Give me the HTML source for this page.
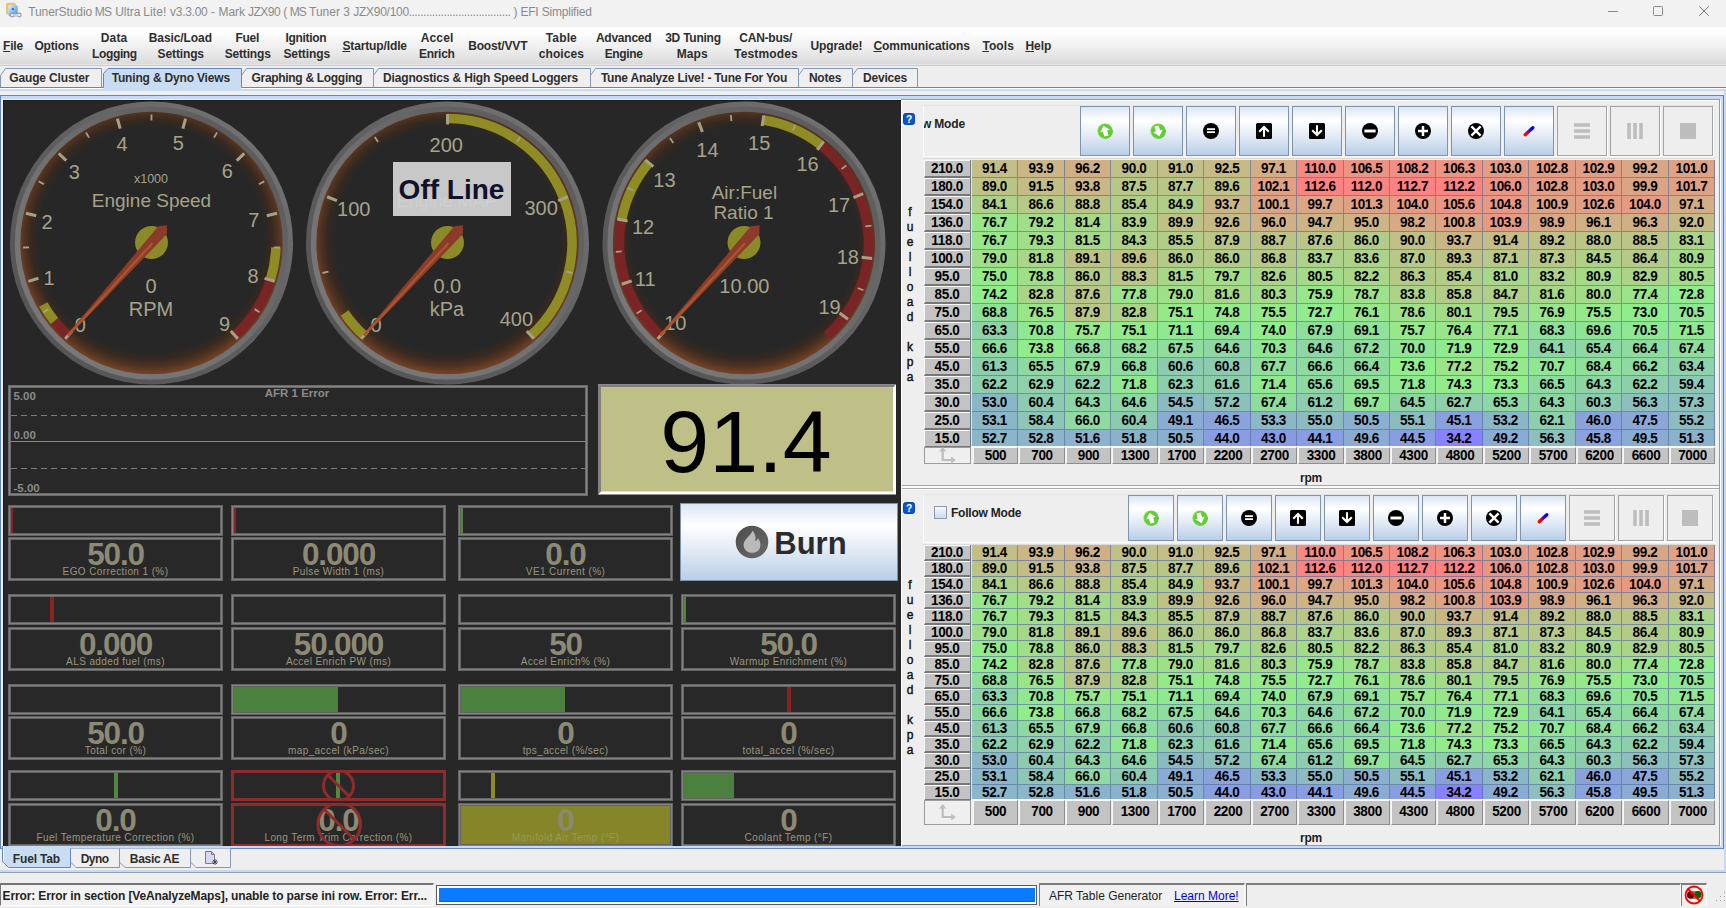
<!DOCTYPE html><html><head><meta charset="utf-8"><title>TunerStudio MS Ultra Lite!</title><style>
*{box-sizing:border-box}
html,body{margin:0;padding:0}
body{width:1726px;height:908px;position:relative;overflow:hidden;background:#eeeeee;font-family:"Liberation Sans",Arial,sans-serif;font-size:12px;color:#222}
.a{position:absolute}
.sb{font-weight:bold;letter-spacing:-0.15px}
#title{left:0;top:0;width:1726px;height:27px;background:#f2f2f2}
#title .t{top:4px;font-size:12px;color:#8a8a8a;white-space:nowrap;line-height:16px}
#menu{left:0;top:27px;width:1726px;height:37px;background:linear-gradient(#ffffff 0%,#fcfcfc 20%,#f0f0f0 52%,#dbdbdb 100%)}
.mi{position:absolute;top:0;height:37px;display:flex;align-items:center;justify-content:center;text-align:center;line-height:16px;font-size:12px;color:#222;white-space:nowrap;font-weight:bold;letter-spacing:-0.15px;transform:translateX(-50%)}
.ml{position:absolute;font-size:12px;line-height:16px;font-weight:bold;color:#2e2e2e;white-space:nowrap}
.ml u{text-decoration:underline;text-underline-offset:1px}
.tab{position:absolute;top:68px;height:20px;border:1px solid #8a9bb5;border-bottom:1px solid #8a9bb5;background:#efefef;font-size:12px;line-height:18px;text-align:center;color:#222;font-weight:bold;letter-spacing:-0.15px;white-space:nowrap}
.tl{font-size:12px;line-height:16px;font-weight:bold;letter-spacing:-0.15px;color:#2e2e2e;white-space:nowrap;z-index:4}
.btab{position:absolute;top:849px;height:19px;border:1px solid #8a9bb5;border-top:none;background:#efefef;font-size:12px;line-height:19px;text-align:center;color:#222;font-weight:bold;letter-spacing:-0.15px;white-space:nowrap}
#dark{left:3px;top:100px;width:898px;height:746px;background:#272727;overflow:hidden;box-shadow:inset 1px 1px 0 #1b1b1b}
.gb{position:absolute;border:3px solid #646464;background:#282828}
.gb:before{content:'';position:absolute;left:-2px;top:-2px;right:-2px;bottom:-2px;border:1px solid #828282}
.gb.red,.gb.red:before{border-color:#8f2b2b}
.gv{position:absolute;left:0;right:0;text-align:center;font-weight:bold;font-size:31.5px;letter-spacing:-1.15px;line-height:28px;color:#8c8a74;top:5px}
.gl{position:absolute;left:0;right:0;text-align:center;font-size:10px;line-height:12px;color:#9a977c;letter-spacing:0.4px;top:28px;white-space:nowrap}
.tb{position:absolute;border:1px solid #7f93ad;background:linear-gradient(#dbe6f3 0%,#ffffff 28%,#e3ebf5 60%,#b9cee7 100%)}
.tbd{position:absolute;border:1px solid #a2a2a2;background:#eeeeee;box-shadow:1px 1px 0 #fff}
.rh{position:absolute;left:924px;width:46px;background:#c3c3c3;font-weight:bold;font-size:13.5px;letter-spacing:-0.35px;text-align:center;color:#000;border-top:1px solid #fafafa;border-bottom:2px solid #787878;border-left:1px solid #fafafa;padding-right:1px}
.ch{position:absolute;background:#c3c3c3;font-weight:bold;font-size:13.5px;letter-spacing:-0.35px;text-align:center;color:#000;border:1px solid #8e8e8e;border-top:1px solid #f8f8f8;border-left:1px solid #f8f8f8}
.c{position:absolute;font-weight:bold;font-size:13.5px;letter-spacing:-0.35px;text-align:center;color:#000;border-right:1px solid rgba(80,105,150,.6);border-bottom:1px solid rgba(80,105,150,.6)}
.c b,.rh b,.ch b{font-weight:inherit;display:inline-block;transform:scaleY(1.08);transform-origin:50% 62%}
.yl{position:absolute;left:903px;width:14px;text-align:center;font-size:12px;line-height:15px;color:#111;-webkit-text-stroke:0.4px #111}
</style></head><body>
<div id="title" class="a">
<svg class="a" style="left:5px;top:2px" width="18" height="18" viewBox="5 2 18 18"><defs><linearGradient id="ic1" x1="0" y1="0" x2="1" y2="1"><stop offset="0" stop-color="#e8f3fd"/><stop offset="0.5" stop-color="#8cc0f2"/><stop offset="1" stop-color="#2f86e4"/></linearGradient></defs><rect x="6.500" y="3.300" width="8.800" height="10.600" rx="1" fill="#e6c577" stroke="#d8b45c" stroke-width=".6"/><rect x="8.300" y="5.200" width="9.400" height="11.100" rx="1.200" fill="url(#ic1)"/><rect x="11.800" y="8.200" width="2.100" height="1.800" fill="#2267c4"/><g fill="none" stroke="#9098a4" stroke-width="1.100"><circle cx="12.300" cy="15" r="1.900" fill="#e9ecf0"/><circle cx="19.300" cy="15" r="1.900" fill="#e9ecf0"/></g><rect x="13.600" y="13.900" width="4.400" height="2.200" fill="#c9cdd4"/></svg>
<div class="a t" style="left:28.2px;letter-spacing:-0.093px">TunerStudio</div>
<div class="a t" style="left:94.7px;letter-spacing:-0.800px">MS</div>
<div class="a t" style="left:115.2px;letter-spacing:-0.007px">Ultra</div>
<div class="a t" style="left:143.2px;letter-spacing:0.124px">Lite!</div>
<div class="a t" style="left:170.1px;letter-spacing:-0.295px">v3.3.00</div>
<div class="a t" style="left:210.7px;letter-spacing:0.000px">-</div>
<div class="a t" style="left:218.5px;letter-spacing:-0.092px">Mark</div>
<div class="a t" style="left:248.1px;letter-spacing:-0.556px">JZX90</div>
<div class="a t" style="left:283.3px;letter-spacing:0.000px">(</div>
<div class="a t" style="left:289.7px;letter-spacing:-0.950px">MS</div>
<div class="a t" style="left:309.1px;letter-spacing:-0.020px">Tuner</div>
<div class="a t" style="left:343.2px;letter-spacing:0.000px">3</div>
<div class="a t" style="left:353.3px;letter-spacing:-0.271px">JZX90/100</div>
<div class="a t" id="tB" style="left:408.5px;letter-spacing:-0.42px">...................................</div>
<div class="a t" id="tC" style="left:513.5px;letter-spacing:-0.2px">) EFI Simplified</div>
<svg class="a" style="left:1590px;top:0" width="136" height="27" viewBox="0 0 136 27"><g stroke="#8a8a8a" stroke-width="1" fill="none"><path d="M18 11.5h10"/><rect x="63.5" y="6.500" width="9" height="9" rx="1"/><path d="M109.300 6.300l9.500 9.500M118.800 6.300l-9.500 9.500" stroke="#777"/></g></svg>
</div>
<div id="menu" class="a">
<div class="ml" style="left:3.1px;top:11px;letter-spacing:-0.230px"><u>F</u>ile</div>
<div class="ml" style="left:34.4px;top:11px;letter-spacing:-0.147px">O<u>p</u>tions</div>
<div class="ml" style="left:100.8px;top:3px;letter-spacing:0.122px">Data</div>
<div class="ml" style="left:92.0px;top:18.5px;letter-spacing:-0.359px">Logging</div>
<div class="ml" style="left:148.8px;top:3px;letter-spacing:-0.092px">Basic/Load</div>
<div class="ml" style="left:157.6px;top:18.5px;letter-spacing:-0.130px">Settings</div>
<div class="ml" style="left:235.4px;top:3px;letter-spacing:-0.267px">Fuel</div>
<div class="ml" style="left:224.7px;top:18.5px;letter-spacing:-0.168px">Settings</div>
<div class="ml" style="left:285.4px;top:3px;letter-spacing:-0.290px">Ignition</div>
<div class="ml" style="left:283.4px;top:18.5px;letter-spacing:-0.080px">Settings</div>
<div class="ml" style="left:342.4px;top:11px;letter-spacing:-0.126px"><u>S</u>tartup/Idle</div>
<div class="ml" style="left:420.7px;top:3px;letter-spacing:0.156px">Accel</div>
<div class="ml" style="left:418.9px;top:18.5px;letter-spacing:-0.257px">Enrich</div>
<div class="ml" style="left:468.2px;top:11px;letter-spacing:-0.174px">Boost/VVT</div>
<div class="ml" style="left:545.8px;top:3px;letter-spacing:0.130px">Table</div>
<div class="ml" style="left:538.8px;top:18.5px;letter-spacing:0.059px">choices</div>
<div class="ml" style="left:595.9px;top:3px;letter-spacing:-0.231px">Advanced</div>
<div class="ml" style="left:604.7px;top:18.5px;letter-spacing:-0.333px">Engine</div>
<div class="ml" style="left:665.2px;top:3px;letter-spacing:-0.241px">3D Tuning</div>
<div class="ml" style="left:676.7px;top:18.5px;letter-spacing:0.108px">Maps</div>
<div class="ml" style="left:739.3px;top:3px;letter-spacing:-0.232px">CAN-bus/</div>
<div class="ml" style="left:734.1px;top:18.5px;letter-spacing:0.149px">Testmodes</div>
<div class="ml" style="left:810.4px;top:11px;letter-spacing:-0.084px">Upgrade!</div>
<div class="ml" style="left:873.4px;top:11px;letter-spacing:-0.060px"><u>C</u>ommunications</div>
<div class="ml" style="left:982.4px;top:11px;letter-spacing:0.078px"><u>T</u>ools</div>
<div class="ml" style="left:1025.4px;top:11px;letter-spacing:0.000px"><u>H</u>elp</div>
</div>
<div class="a" style="left:0;top:64px;width:1726px;height:1px;background:#e6e6e6"></div>
<div class="a" style="left:0;top:65px;width:1726px;height:1px;background:#cccccc"></div>
<div class="a" style="left:0;top:87px;width:1726px;height:1px;background:#6584c4"></div>
<div class="a" style="left:0;top:88px;width:1726px;height:1px;background:#ffffff"></div>
<div class="a" style="left:0;top:89px;width:1726px;height:2px;background:#c6dbf2"></div>
<div class="a" style="left:0;top:91px;width:1726px;height:4px;background:#efefef"></div>
<div class="a" style="left:0;top:95px;width:1724px;height:754px;background:#c6dbf2;border:1px solid #6584c4;border-right-color:#6a7f99"></div>
<div class="a" style="left:1724px;top:89px;width:2px;height:783px;background:#c6dbf2"></div>

<div class="a" style="left:1px;top:96px;width:1720px;height:750px;background:#eeeeee"></div>
<div class="a" style="left:1px;top:96px;width:1722px;height:3px;background:#c6dbf2"></div>
<div class="a" style="left:1721px;top:96px;width:2px;height:752px;background:#c6dbf2"></div>
<div class="a" style="left:1px;top:846px;width:1722px;height:2px;background:#c6dbf2"></div>
<div class="a" style="left:901px;top:99px;width:819px;height:1px;background:#9a9a9a"></div>
<div class="a" style="left:901px;top:100px;width:819px;height:1px;background:#ffffff"></div>
<div class="a" style="left:1719px;top:99px;width:1px;height:747px;background:#9a9a9a"></div>
<div class="a" style="left:1720px;top:100px;width:1px;height:746px;background:#ffffff"></div>
<div class="a" style="left:901px;top:845px;width:819px;height:1px;background:#9a9a9a"></div>
<div class="a" style="left:901px;top:100px;width:1px;height:746px;background:#ffffff"></div>
<svg class="a" style="left:0;top:60px;z-index:3" width="930" height="36" viewBox="0 60 930 36"><path d="M0.5 87V75.5L5.5 68.5H101.5V87" fill="#efefef" stroke="#8597b8" stroke-width="1"/><path d="M241.5 87V75.5L246.5 68.5H373.5V87" fill="#efefef" stroke="#8597b8" stroke-width="1"/><path d="M373.5 87V75.5L378.5 68.5H590.5V87" fill="#efefef" stroke="#8597b8" stroke-width="1"/><path d="M590.5 87V75.5L595.5 68.5H798.5V87" fill="#efefef" stroke="#8597b8" stroke-width="1"/><path d="M798.5 87V75.5L803.5 68.5H852.5V87" fill="#efefef" stroke="#8597b8" stroke-width="1"/><path d="M852.5 87V75.5L857.5 68.5H917.5V87" fill="#efefef" stroke="#8597b8" stroke-width="1"/><path d="M103.5 91V73.5L108.0 68.5H241.5V91z" fill="#c8ddf2" stroke="none"/><path d="M103.5 87.5V73.5L108.0 68.5H241.5V87.5" fill="none" stroke="#6584c4" stroke-width="1"/></svg>
<div class="a tl" style="left:9.3px;top:70px;letter-spacing:-0.150px">Gauge Cluster</div>
<div class="a tl" style="left:111.7px;top:70px;letter-spacing:-0.176px">Tuning &amp; Dyno Views</div>
<div class="a tl" style="left:251.5px;top:70px;letter-spacing:-0.306px">Graphing &amp; Logging</div>
<div class="a tl" style="left:383.0px;top:70px;letter-spacing:-0.156px">Diagnostics &amp; High Speed Loggers</div>
<div class="a tl" style="left:600.9px;top:70px;letter-spacing:-0.217px">Tune Analyze Live! - Tune For You</div>
<div class="a tl" style="left:808.9px;top:70px;letter-spacing:-0.230px">Notes</div>
<div class="a tl" style="left:862.9px;top:70px;letter-spacing:-0.164px">Devices</div><div id="dark" class="a">
<svg class="a" style="left:0;top:0" width="898" height="746" viewBox="3 100 898 746" font-family="Liberation Sans, Arial, sans-serif">
<defs>
<linearGradient id="ring" x1="0.15" y1="0.85" x2="0.85" y2="0.15"><stop offset="0" stop-color="#787878"/><stop offset="0.45" stop-color="#707070"/><stop offset="1" stop-color="#5c5c5c"/></linearGradient>
<linearGradient id="ringo" x1="0.15" y1="0.85" x2="0.85" y2="0.15"><stop offset="0" stop-color="#565656"/><stop offset="0.5" stop-color="#5e5e5e"/><stop offset="1" stop-color="#707070"/></linearGradient>
<radialGradient id="face1" gradientUnits="userSpaceOnUse" cx="151.5" cy="239.5" r="135.1"><stop offset="0" stop-color="#272727"/><stop offset="0.835" stop-color="#272727"/><stop offset="0.89" stop-color="#36291f"/><stop offset="0.94" stop-color="#503221"/><stop offset="0.98" stop-color="#6c3e25"/><stop offset="1" stop-color="#754227"/></radialGradient>
<radialGradient id="face2" gradientUnits="userSpaceOnUse" cx="447.5" cy="239.5" r="135.1"><stop offset="0" stop-color="#272727"/><stop offset="0.835" stop-color="#272727"/><stop offset="0.89" stop-color="#36291f"/><stop offset="0.94" stop-color="#503221"/><stop offset="0.98" stop-color="#6c3e25"/><stop offset="1" stop-color="#754227"/></radialGradient>
<radialGradient id="face3" gradientUnits="userSpaceOnUse" cx="744" cy="239.5" r="135.1"><stop offset="0" stop-color="#272727"/><stop offset="0.835" stop-color="#272727"/><stop offset="0.89" stop-color="#36291f"/><stop offset="0.94" stop-color="#503221"/><stop offset="0.98" stop-color="#6c3e25"/><stop offset="1" stop-color="#754227"/></radialGradient>
</defs>
<circle cx="151.5" cy="243" r="141.5" fill="url(#ringo)"/>
<circle cx="151.5" cy="243" r="136.6" fill="url(#ring)"/>
<circle cx="151.5" cy="243" r="131.2" fill="url(#face1)"/>
<path d="M68.19 335.52A124.5 124.5 0 0 1 54.47 321.01" fill="none" stroke="#7a2426" stroke-width="9.6"/>
<path d="M54.47 321.01A124.5 124.5 0 0 1 43.25 304.5" fill="none" stroke="#8f8b25" stroke-width="9.6"/>
<path d="M275.92 247.34A124.5 124.5 0 0 1 270.35 280.09" fill="none" stroke="#8f8b25" stroke-width="9.6"/>
<path d="M270.35 280.09A124.5 124.5 0 0 1 234.81 335.52" fill="none" stroke="#7a2426" stroke-width="9.6"/>
<path d="M48.38 309.12L43.33 312.36" stroke="#a5a187" stroke-width="1.8"/>
<path d="M29.07 247.28L23.08 247.48" stroke="#a5a187" stroke-width="1.8"/>
<path d="M44.02 184.24L38.75 181.36" stroke="#a5a187" stroke-width="1.8"/>
<path d="M89.02 137.63L85.96 132.47" stroke="#a5a187" stroke-width="1.8"/>
<path d="M151.5 120.5L151.5 114.5" stroke="#a5a187" stroke-width="1.8"/>
<path d="M213.98 137.63L217.04 132.47" stroke="#a5a187" stroke-width="1.8"/>
<path d="M258.98 184.24L264.25 181.36" stroke="#a5a187" stroke-width="1.8"/>
<path d="M273.93 247.28L279.92 247.48" stroke="#a5a187" stroke-width="1.8"/>
<path d="M254.62 309.12L259.67 312.36" stroke="#a5a187" stroke-width="1.8"/>
<path d="M72.21 331.06L65.18 338.87" stroke="#a5a187" stroke-width="3"/>
<path d="M38.38 278.3L28.36 281.43" stroke="#a5a187" stroke-width="3"/>
<path d="M36.19 215.67L25.98 213.25" stroke="#a5a187" stroke-width="3"/>
<path d="M66.26 160.68L58.71 153.39" stroke="#a5a187" stroke-width="3"/>
<path d="M120.16 128.72L117.39 118.59" stroke="#a5a187" stroke-width="3"/>
<path d="M182.84 128.72L185.61 118.59" stroke="#a5a187" stroke-width="3"/>
<path d="M236.74 160.68L244.29 153.39" stroke="#a5a187" stroke-width="3"/>
<path d="M266.81 215.67L277.02 213.25" stroke="#a5a187" stroke-width="3"/>
<path d="M264.62 278.3L274.64 281.43" stroke="#a5a187" stroke-width="3"/>
<path d="M230.79 331.06L237.82 338.87" stroke="#a5a187" stroke-width="3"/>
<text x="80.4" y="332.2" font-size="20" fill="#a6a38b" text-anchor="middle">0</text>
<text x="49" y="285.2" font-size="20" fill="#a6a38b" text-anchor="middle">1</text>
<text x="47" y="229.2" font-size="20" fill="#a6a38b" text-anchor="middle">2</text>
<text x="74.3" y="179.2" font-size="20" fill="#a6a38b" text-anchor="middle">3</text>
<text x="122" y="151.2" font-size="20" fill="#a6a38b" text-anchor="middle">4</text>
<text x="178.4" y="150.2" font-size="20" fill="#a6a38b" text-anchor="middle">5</text>
<text x="227.3" y="178.2" font-size="20" fill="#a6a38b" text-anchor="middle">6</text>
<text x="253.7" y="226.7" font-size="20" fill="#a6a38b" text-anchor="middle">7</text>
<text x="253" y="282.9" font-size="20" fill="#a6a38b" text-anchor="middle">8</text>
<text x="224.6" y="331.2" font-size="20" fill="#a6a38b" text-anchor="middle">9</text>
<text x="151" y="182.5" font-size="12.5" fill="#a6a38b" text-anchor="middle">x1000</text>
<text x="151.5" y="206.84" font-size="19" fill="#a6a38b" text-anchor="middle">Engine Speed</text>
<text x="151" y="293.2" font-size="20" fill="#a6a38b" text-anchor="middle">0</text>
<text x="151" y="316.2" font-size="20" fill="#a6a38b" text-anchor="middle">RPM</text>
<circle cx="151.5" cy="242.5" r="16.5" fill="#8b8a28"/><polygon points="68.68,336.13 166.85,234.12 167.02,225.26 158.23,226.36 67.04,334.66" fill="#8c3b2a"/><path d="M67.86 335.39L152.39 243.3" stroke="#ae5a2c" stroke-width="2.4" stroke-opacity="0.85"/>
<circle cx="447.5" cy="243" r="141.5" fill="url(#ringo)"/>
<circle cx="447.5" cy="243" r="136.6" fill="url(#ring)"/>
<circle cx="447.5" cy="243" r="131.2" fill="url(#face2)"/>
<path d="M364.19 335.52A124.5 124.5 0 0 1 344.53 312.98" fill="none" stroke="#8f8b25" stroke-width="9.6"/>
<path d="M447.5 118.5A124.5 124.5 0 0 1 530.81 335.52" fill="none" stroke="#8f8b25" stroke-width="9.6"/>
<path d="M328.38 271.6L322.55 273" stroke="#a5a187" stroke-width="1.8"/>
<path d="M378.12 142.04L374.72 137.1" stroke="#a5a187" stroke-width="1.8"/>
<path d="M516.88 142.04L520.28 137.1" stroke="#a5a187" stroke-width="1.8"/>
<path d="M566.62 271.6L572.45 273" stroke="#a5a187" stroke-width="1.8"/>
<path d="M368.21 331.06L361.18 338.87" stroke="#a5a187" stroke-width="3"/>
<path d="M336.87 200.53L327.07 196.77" stroke="#a5a187" stroke-width="3"/>
<path d="M447.5 124.5L447.5 114" stroke="#a5a187" stroke-width="3"/>
<path d="M558.13 200.53L567.93 196.77" stroke="#a5a187" stroke-width="3"/>
<path d="M526.79 331.06L533.82 338.87" stroke="#a5a187" stroke-width="3"/>
<text x="376" y="332.2" font-size="20" fill="#a6a38b" text-anchor="middle">0</text>
<text x="353.8" y="216.2" font-size="20" fill="#a6a38b" text-anchor="middle">100</text>
<text x="446.3" y="151.7" font-size="20" fill="#a6a38b" text-anchor="middle">200</text>
<text x="541.2" y="215.2" font-size="20" fill="#a6a38b" text-anchor="middle">300</text>
<text x="516.4" y="326.2" font-size="20" fill="#a6a38b" text-anchor="middle">400</text>
<text x="446.5" y="206.98" font-size="18" fill="#a6a38b" text-anchor="middle">Engine MAP</text>
<text x="447.3" y="293.2" font-size="20" fill="#a6a38b" text-anchor="middle">0.0</text>
<text x="447" y="315.7" font-size="20" fill="#a6a38b" text-anchor="middle">kPa</text>
<circle cx="447.5" cy="242.5" r="16.5" fill="#8b8a28"/><polygon points="364.68,336.13 462.85,234.12 463.02,225.26 454.23,226.36 363.04,334.66" fill="#8c3b2a"/><path d="M363.86 335.39L448.39 243.3" stroke="#ae5a2c" stroke-width="2.4" stroke-opacity="0.85"/>
<circle cx="744" cy="243" r="141.5" fill="url(#ringo)"/>
<circle cx="744" cy="243" r="136.6" fill="url(#ring)"/>
<circle cx="744" cy="243" r="131.2" fill="url(#face3)"/>
<path d="M660.69 335.52A124.5 124.5 0 0 1 621.67 219.83" fill="none" stroke="#7a2426" stroke-width="9.6"/>
<path d="M621.67 219.83A124.5 124.5 0 0 1 648.75 162.83" fill="none" stroke="#8f8b25" stroke-width="9.6"/>
<path d="M763.07 119.97A124.5 124.5 0 0 1 820.94 145.12" fill="none" stroke="#8f8b25" stroke-width="9.6"/>
<path d="M820.94 145.12A124.5 124.5 0 0 1 827.31 335.52" fill="none" stroke="#7a2426" stroke-width="9.6"/>
<path d="M641.64 310.29L636.62 313.59" stroke="#a5a187" stroke-width="1.8"/>
<path d="M621.79 251.45L615.81 251.87" stroke="#a5a187" stroke-width="1.8"/>
<path d="M633.35 190.45L627.93 187.87" stroke="#a5a187" stroke-width="1.8"/>
<path d="M673.33 142.94L669.87 138.04" stroke="#a5a187" stroke-width="1.8"/>
<path d="M731.47 121.14L730.85 115.17" stroke="#a5a187" stroke-width="1.8"/>
<path d="M792.83 130.65L795.22 125.15" stroke="#a5a187" stroke-width="1.8"/>
<path d="M841.64 169.02L846.42 165.4" stroke="#a5a187" stroke-width="1.8"/>
<path d="M865.37 226.4L871.31 225.59" stroke="#a5a187" stroke-width="1.8"/>
<path d="M857.92 288.04L863.5 290.25" stroke="#a5a187" stroke-width="1.8"/>
<path d="M664.71 331.06L657.68 338.87" stroke="#a5a187" stroke-width="3"/>
<path d="M631.71 280.87L621.77 284.23" stroke="#a5a187" stroke-width="3"/>
<path d="M627.57 220.95L617.25 219" stroke="#a5a187" stroke-width="3"/>
<path d="M653.34 166.69L645.3 159.93" stroke="#a5a187" stroke-width="3"/>
<path d="M702.4 132.04L698.71 122.21" stroke="#a5a187" stroke-width="3"/>
<path d="M762.15 125.9L763.75 115.52" stroke="#a5a187" stroke-width="3"/>
<path d="M817.23 149.84L823.72 141.58" stroke="#a5a187" stroke-width="3"/>
<path d="M853.5 197.71L863.21 193.7" stroke="#a5a187" stroke-width="3"/>
<path d="M861.64 257.22L872.07 258.48" stroke="#a5a187" stroke-width="3"/>
<path d="M839.56 313.08L848.02 319.29" stroke="#a5a187" stroke-width="3"/>
<text x="675.3" y="329.5" font-size="20" fill="#a6a38b" text-anchor="middle">10</text>
<text x="645.2" y="286.2" font-size="20" fill="#a6a38b" text-anchor="middle">11</text>
<text x="643" y="233.7" font-size="20" fill="#a6a38b" text-anchor="middle">12</text>
<text x="664.4" y="187.2" font-size="20" fill="#a6a38b" text-anchor="middle">13</text>
<text x="707.4" y="156.7" font-size="20" fill="#a6a38b" text-anchor="middle">14</text>
<text x="759.2" y="150.2" font-size="20" fill="#a6a38b" text-anchor="middle">15</text>
<text x="807.5" y="170.9" font-size="20" fill="#a6a38b" text-anchor="middle">16</text>
<text x="839" y="212.2" font-size="20" fill="#a6a38b" text-anchor="middle">17</text>
<text x="847.8" y="264.2" font-size="20" fill="#a6a38b" text-anchor="middle">18</text>
<text x="829.6" y="313.7" font-size="20" fill="#a6a38b" text-anchor="middle">19</text>
<text x="744.4" y="198.84" font-size="19" fill="#a6a38b" text-anchor="middle">Air:Fuel</text>
<text x="743.5" y="218.84" font-size="19" fill="#a6a38b" text-anchor="middle">Ratio 1</text>
<text x="744.4" y="293.2" font-size="20" fill="#a6a38b" text-anchor="middle">10.00</text>
<circle cx="744" cy="242.5" r="16.5" fill="#8b8a28"/><polygon points="661.18,336.13 759.35,234.12 759.52,225.26 750.73,226.36 659.54,334.66" fill="#8c3b2a"/><path d="M660.36 335.39L744.89 243.3" stroke="#ae5a2c" stroke-width="2.4" stroke-opacity="0.85"/>
<rect x="393" y="162" width="118" height="54" fill="#d2d2d2" fill-opacity="0.945"/>
<text x="451.5" y="198.5" font-size="28" font-weight="bold" fill="#11112a" text-anchor="middle">Off Line</text>
<rect x="9.500" y="386.500" width="577" height="108" fill="#282828" stroke="#6a6a6a" stroke-width="3"/>
<rect x="9.500" y="386.500" width="577" height="108" fill="none" stroke="#868686" stroke-width="1"/>
<path d="M11 415.500H585M11 468.500H585" stroke="#7c7c7c" stroke-width="1" stroke-dasharray="6 4"/>
<path d="M11 441.500H585" stroke="#8a8a8a" stroke-width="1"/>
<text x="297" y="396.500" font-size="11.500" font-weight="bold" fill="#8a8a8a" text-anchor="middle">AFR 1 Error</text>
<text x="13.500" y="400" font-size="11.500" font-weight="bold" fill="#8a8a8a">5.00</text>
<text x="13.500" y="438.500" font-size="11.500" font-weight="bold" fill="#8a8a8a">0.00</text>
<text x="13.500" y="491.500" font-size="11.500" font-weight="bold" fill="#8a8a8a">-5.00</text>
<rect x="598" y="384.500" width="298" height="110" fill="#ffffff"/>
<path d="M598 384.500H896L893 387.500H601V491.500L598 494.500z" fill="#808080"/>
<rect x="601" y="387.500" width="292" height="104" fill="#bfbf88"/>
<text x="746" y="472" font-size="88" fill="#000" text-anchor="middle">91.4</text>
</svg>
<div class="gb" style="left:5px;top:405px;width:215px;height:31px;">
<div class="a" style="left:0px;top:0;width:2px;height:25px;background:#8b2222"></div>
</div>
<div class="gb" style="left:5px;top:437px;width:215px;height:44px;">
<div class="gv" style="top:0px">50.0</div><div class="gl" style="top:26px">EGO Correction 1 (%)</div>
</div>
<div class="gb" style="left:228px;top:405px;width:215px;height:31px;">
<div class="a" style="left:0px;top:0;width:2px;height:25px;background:#8b2222"></div>
</div>
<div class="gb" style="left:228px;top:437px;width:215px;height:44px;">
<div class="gv" style="top:0px">0.000</div><div class="gl" style="top:26px">Pulse Width 1 (ms)</div>
</div>
<div class="gb" style="left:455px;top:405px;width:215px;height:31px;">
<div class="a" style="left:0px;top:0;width:2px;height:25px;background:#4f8a3c"></div>
</div>
<div class="gb" style="left:455px;top:437px;width:215px;height:44px;">
<div class="gv" style="top:0px">0.0</div><div class="gl" style="top:26px">VE1 Current (%)</div>
</div>
<div class="gb" style="left:5px;top:494px;width:215px;height:31px;">
<div class="a" style="left:39px;top:0;width:4px;height:25px;background:#8b2222"></div>
</div>
<div class="gb" style="left:5px;top:527px;width:215px;height:44px;">
<div class="gv" style="top:0px">0.000</div><div class="gl" style="top:26px">ALS added fuel (ms)</div>
</div>
<div class="gb" style="left:228px;top:494px;width:215px;height:31px;">
</div>
<div class="gb" style="left:228px;top:527px;width:215px;height:44px;">
<div class="gv" style="top:0px">50.000</div><div class="gl" style="top:26px">Accel Enrich PW (ms)</div>
</div>
<div class="gb" style="left:455px;top:494px;width:215px;height:31px;">
</div>
<div class="gb" style="left:455px;top:527px;width:215px;height:44px;">
<div class="gv" style="top:0px">50</div><div class="gl" style="top:26px">Accel Enrich% (%)</div>
</div>
<div class="gb" style="left:678px;top:494px;width:215px;height:31px;">
<div class="a" style="left:0px;top:0;width:2px;height:25px;background:#4f8a3c"></div>
</div>
<div class="gb" style="left:678px;top:527px;width:215px;height:44px;">
<div class="gv" style="top:0px">50.0</div><div class="gl" style="top:26px">Warmup Enrichment (%)</div>
</div>
<div class="gb" style="left:5px;top:584px;width:215px;height:31px;">
</div>
<div class="gb" style="left:5px;top:616px;width:215px;height:44px;">
<div class="gv" style="top:0px">50.0</div><div class="gl" style="top:26px">Total cor (%)</div>
</div>
<div class="gb" style="left:228px;top:584px;width:215px;height:31px;">
<div class="a" style="left:0px;top:0;width:104px;height:25px;background:#4c803e"></div>
</div>
<div class="gb" style="left:228px;top:616px;width:215px;height:44px;">
<div class="gv" style="top:0px">0</div><div class="gl" style="top:26px">map_accel (kPa/sec)</div>
</div>
<div class="gb" style="left:455px;top:584px;width:215px;height:31px;">
<div class="a" style="left:0px;top:0;width:104px;height:25px;background:#4c803e"></div>
</div>
<div class="gb" style="left:455px;top:616px;width:215px;height:44px;">
<div class="gv" style="top:0px">0</div><div class="gl" style="top:26px">tps_accel (%/sec)</div>
</div>
<div class="gb" style="left:678px;top:584px;width:215px;height:31px;">
<div class="a" style="left:103px;top:0;width:4px;height:25px;background:#8b2222"></div>
</div>
<div class="gb" style="left:678px;top:616px;width:215px;height:44px;">
<div class="gv" style="top:0px">0</div><div class="gl" style="top:26px">total_accel (%/sec)</div>
</div>
<div class="gb" style="left:5px;top:670px;width:215px;height:31px;">
<div class="a" style="left:102.5px;top:0;width:4px;height:25px;background:#4f8a3c"></div>
</div>
<div class="gb" style="left:5px;top:703px;width:215px;height:44px;">
<div class="gv" style="top:0px">0.0</div><div class="gl" style="top:26px">Fuel Temperature Correction (%)</div>
</div>
<div class="gb red" style="left:228px;top:670px;width:215px;height:31px;">
<div class="a" style="left:102px;top:0;width:4px;height:25px;background:#4f8a3c"></div>
</div>
<div class="gb red" style="left:228px;top:703px;width:215px;height:44px;">
<div class="gv" style="top:0px">0.0</div><div class="gl" style="top:26px">Long Term Trim Correction (%)</div>
</div>
<div class="gb" style="left:455px;top:670px;width:215px;height:31px;">
<div class="a" style="left:30px;top:0;width:4px;height:25px;background:#8f8b25"></div>
</div>
<div class="gb" style="left:455px;top:703px;width:215px;height:44px;background:#85852a;">
<div class="gv" style="top:0px;color:#8a8a6e">0</div><div class="gl" style="top:26px;color:#9a9a52">Manifold Air Temp (°F)</div>
</div>
<div class="gb" style="left:678px;top:670px;width:215px;height:31px;">
<div class="a" style="left:0px;top:0;width:50px;height:25px;background:#4c803e"></div>
</div>
<div class="gb" style="left:678px;top:703px;width:215px;height:44px;">
<div class="gv" style="top:0px">0</div><div class="gl" style="top:26px">Coolant Temp (°F)</div>
</div>
<svg class="a" style="left:228px;top:670px" width="215" height="31" viewBox="231 770 215 31"><g fill="none" stroke="#8f2b2b" stroke-width="3"><circle cx="338.500" cy="785.700" r="15"/><path d="M327.900 775.100L349.100 796.300"/></g></svg>
<svg class="a" style="left:228px;top:703px" width="215" height="43" viewBox="231 803 215 43"><g fill="none" stroke="#8f2b2b" stroke-width="3"><circle cx="339.200" cy="824.400" r="21.300"/><path d="M324.100 809.300L354.300 839.500"/></g></svg>
<div class="a" style="left:228px;top:745px;width:215px;height:1px;background:#ff0000"></div>
<div class="tb" style="left:677px;top:403px;width:218px;height:78px"></div>
<svg class="a" style="left:732px;top:425px" width="34" height="34" viewBox="0 0 34 34"><defs><linearGradient id="fg" x1="0" y1="0" x2="1" y2="1"><stop offset="0" stop-color="#4c4c4c"/><stop offset="1" stop-color="#6a6a6a"/></linearGradient></defs><circle cx="17" cy="17" r="16.3" fill="url(#fg)"/><path d="M17.5 5.5c2.5 3.5 4 6 2.5 10.5 1.5-.3 2.6-1.6 3-3 2 3 2.8 5.5 2.300 8.500-.8 4-4 6.300-8.300 6.300s-7.800-2.800-8.300-6.800c-.5-4 1.800-6.500 4.300-9 2-2 3.500-3.700 4.500-6.500z" fill="#b9b9b9"/></svg>
<div class="a" style="left:771.3px;top:427px;font-size:31px;font-weight:bold;line-height:34px;color:#2b2b2b">Burn</div>
</div><div class="a" style="left:903px;top:113px;line-height:0"><svg width="12" height="12" viewBox="0 0 13 13"><rect x="0.500" y="0.500" width="12" height="12" rx="2.500" fill="#0a56c8" stroke="#003c9e"/><text x="6.500" y="10.500" font-size="11" font-weight="bold" fill="#fff" text-anchor="middle" font-family="Liberation Sans, Arial, sans-serif">?</text></svg></div>
<div class="a" style="left:923px;top:105px;width:792px;height:52px;border-left:1px solid #fbfbfb;border-bottom:1px solid #fbfbfb;border-top:1px solid #e4e4e4;background:#eeeeee;overflow:hidden"><div class="a sb" style="left:-30px;top:10px;font-size:12px;line-height:16px;white-space:nowrap;color:#222">Follow Mode</div></div>
<div class="a" style="left:923px;top:158px;width:792px;height:1px;background:#dcdcdc"></div>
<div class="tb" style="left:1080px;top:106px;width:50px;height:50px"><div class="a" style="left:16px;top:16px;width:16px;height:16px;line-height:0"><svg width="16" height="16" viewBox="0 0 16 16"><circle cx="8.300" cy="8.300" r="7.500" fill="#49a828"/><circle cx="7.800" cy="7.800" r="7.400" fill="#9be45c"/><circle cx="8.200" cy="8.100" r="7" fill="#5fce33"/><path d="M8 2.500L13 8.200H10.200V13.200H5.800V8.200H3z" fill="#fff" transform="rotate(-16 8 8)"/></svg></div></div>
<div class="tb" style="left:1133px;top:106px;width:50px;height:50px"><div class="a" style="left:16px;top:16px;width:16px;height:16px;line-height:0"><svg width="16" height="16" viewBox="0 0 16 16"><circle cx="8.300" cy="8.300" r="7.500" fill="#49a828"/><circle cx="7.800" cy="7.800" r="7.400" fill="#9be45c"/><circle cx="8.200" cy="8.100" r="7" fill="#5fce33"/><path d="M8 13.500L3 7.800H5.800V2.800H10.200V7.800H13z" fill="#fff" transform="rotate(-16 8 8)"/></svg></div></div>
<div class="tb" style="left:1186px;top:106px;width:50px;height:50px"><div class="a" style="left:16px;top:16px;width:16px;height:16px;line-height:0"><svg width="16" height="16" viewBox="0 0 16 16"><circle cx="8" cy="8" r="8" fill="#000"/><path d="M4 6.100h8M4 9.200h8" stroke="#fff" stroke-width="1.800"/></svg></div></div>
<div class="tb" style="left:1239px;top:106px;width:50px;height:50px"><div class="a" style="left:16px;top:16px;width:16px;height:16px;line-height:0"><svg width="16" height="16" viewBox="0 0 16 16"><rect width="16" height="16" rx="1.500" fill="#000"/><path d="M8 13.800V4.500M3.200 8.800L8 4 12.800 8.800" fill="none" stroke="#fff" stroke-width="2.100"/></svg></div></div>
<div class="tb" style="left:1292px;top:106px;width:50px;height:50px"><div class="a" style="left:16px;top:16px;width:16px;height:16px;line-height:0"><svg width="16" height="16" viewBox="0 0 16 16"><rect width="16" height="16" rx="1.500" fill="#000"/><path d="M8 2.200V11.500M3.200 7.200L8 12 12.800 7.200" fill="none" stroke="#fff" stroke-width="2.100"/></svg></div></div>
<div class="tb" style="left:1345px;top:106px;width:50px;height:50px"><div class="a" style="left:16px;top:16px;width:16px;height:16px;line-height:0"><svg width="16" height="16" viewBox="0 0 16 16"><circle cx="8" cy="8" r="8" fill="#000"/><path d="M2.400 8h11.200" stroke="#fff" stroke-width="2.900"/></svg></div></div>
<div class="tb" style="left:1398px;top:106px;width:50px;height:50px"><div class="a" style="left:16px;top:16px;width:16px;height:16px;line-height:0"><svg width="16" height="16" viewBox="0 0 16 16"><circle cx="8" cy="8" r="8" fill="#000"/><path d="M3 8h10M8 3v10" stroke="#fff" stroke-width="2.500"/></svg></div></div>
<div class="tb" style="left:1451px;top:106px;width:50px;height:50px"><div class="a" style="left:16px;top:16px;width:16px;height:16px;line-height:0"><svg width="16" height="16" viewBox="0 0 16 16"><circle cx="8" cy="8" r="8" fill="#000"/><path d="M3.400 3.400l9.200 9.200M12.600 3.400l-9.200 9.200" stroke="#fff" stroke-width="2.400"/></svg></div></div>
<div class="tb" style="left:1504px;top:106px;width:50px;height:50px"><div class="a" style="left:16px;top:16px;width:16px;height:16px;line-height:0"><svg width="16" height="16" viewBox="0 0 16 16"><defs><linearGradient id="ip" x1="0" y1="1" x2="1" y2="0"><stop offset="0.15" stop-color="#ff0000"/><stop offset="0.85" stop-color="#0000ff"/></linearGradient></defs><path d="M4.200 11.700L11.800 4.700" stroke="url(#ip)" stroke-width="3.300" stroke-linecap="round"/></svg></div></div>
<div class="tbd" style="left:1557px;top:106px;width:50px;height:50px"><div class="a" style="left:16px;top:16px;width:16px;height:16px;line-height:0"><svg width="16" height="16" viewBox="0 0 16 16"><path d="M0 2h16M0 8h16M0 14h16" stroke="#bdbdbd" stroke-width="3.600"/></svg></div></div>
<div class="tbd" style="left:1610px;top:106px;width:50px;height:50px"><div class="a" style="left:16px;top:16px;width:16px;height:16px;line-height:0"><svg width="16" height="16" viewBox="0 0 16 16"><path d="M2 0v16M8 0v16M14 0v16" stroke="#bdbdbd" stroke-width="3.600"/></svg></div></div>
<div class="tbd" style="left:1663px;top:106px;width:50px;height:50px"><div class="a" style="left:16px;top:16px;width:16px;height:16px;line-height:0"><svg width="16" height="16" viewBox="0 0 16 16"><rect width="16" height="16" fill="#bdbdbd"/></svg></div></div>
<div class="rh" style="top:160px;height:18px;line-height:15px"><b>210.0</b></div>
<div class="c" style="left:972px;top:160px;width:46px;height:18px;line-height:17px;background:#c3bd87"><b>91.4</b></div>
<div class="c" style="left:1018px;top:160px;width:47px;height:18px;line-height:17px;background:#cab686"><b>93.9</b></div>
<div class="c" style="left:1065px;top:160px;width:46px;height:18px;line-height:17px;background:#d0af86"><b>96.2</b></div>
<div class="c" style="left:1111px;top:160px;width:47px;height:18px;line-height:17px;background:#bfc087"><b>90.0</b></div>
<div class="c" style="left:1158px;top:160px;width:46px;height:18px;line-height:17px;background:#c2be87"><b>91.0</b></div>
<div class="c" style="left:1204px;top:160px;width:47px;height:18px;line-height:17px;background:#c6ba87"><b>92.5</b></div>
<div class="c" style="left:1251px;top:160px;width:46px;height:18px;line-height:17px;background:#d3ad86"><b>97.1</b></div>
<div class="c" style="left:1297px;top:160px;width:47px;height:18px;line-height:17px;background:#f78983"><b>110.0</b></div>
<div class="c" style="left:1344px;top:160px;width:46px;height:18px;line-height:17px;background:#ed9383"><b>106.5</b></div>
<div class="c" style="left:1390px;top:160px;width:46px;height:18px;line-height:17px;background:#f28e83"><b>108.2</b></div>
<div class="c" style="left:1436px;top:160px;width:47px;height:18px;line-height:17px;background:#ed9483"><b>106.3</b></div>
<div class="c" style="left:1483px;top:160px;width:46px;height:18px;line-height:17px;background:#e49d84"><b>103.0</b></div>
<div class="c" style="left:1529px;top:160px;width:47px;height:18px;line-height:17px;background:#e39d84"><b>102.8</b></div>
<div class="c" style="left:1576px;top:160px;width:46px;height:18px;line-height:17px;background:#e39d84"><b>102.9</b></div>
<div class="c" style="left:1622px;top:160px;width:47px;height:18px;line-height:17px;background:#d9a785"><b>99.2</b></div>
<div class="c" style="left:1669px;top:160px;width:46px;height:18px;line-height:17px;background:#dea285"><b>101.0</b></div>
<div class="rh" style="top:178px;height:18px;line-height:15px"><b>180.0</b></div>
<div class="c" style="left:972px;top:178px;width:46px;height:18px;line-height:17px;background:#bcc387"><b>89.0</b></div>
<div class="c" style="left:1018px;top:178px;width:47px;height:18px;line-height:17px;background:#c3bc87"><b>91.5</b></div>
<div class="c" style="left:1065px;top:178px;width:46px;height:18px;line-height:17px;background:#cab686"><b>93.8</b></div>
<div class="c" style="left:1111px;top:178px;width:47px;height:18px;line-height:17px;background:#b8c788"><b>87.5</b></div>
<div class="c" style="left:1158px;top:178px;width:46px;height:18px;line-height:17px;background:#b8c788"><b>87.7</b></div>
<div class="c" style="left:1204px;top:178px;width:47px;height:18px;line-height:17px;background:#bec287"><b>89.6</b></div>
<div class="c" style="left:1251px;top:178px;width:46px;height:18px;line-height:17px;background:#e19f84"><b>102.1</b></div>
<div class="c" style="left:1297px;top:178px;width:47px;height:18px;line-height:17px;background:#ff8282"><b>112.6</b></div>
<div class="c" style="left:1344px;top:178px;width:46px;height:18px;line-height:17px;background:#fd8482"><b>112.0</b></div>
<div class="c" style="left:1390px;top:178px;width:46px;height:18px;line-height:17px;background:#ff8282"><b>112.7</b></div>
<div class="c" style="left:1436px;top:178px;width:47px;height:18px;line-height:17px;background:#fe8382"><b>112.2</b></div>
<div class="c" style="left:1483px;top:178px;width:46px;height:18px;line-height:17px;background:#ec9484"><b>106.0</b></div>
<div class="c" style="left:1529px;top:178px;width:47px;height:18px;line-height:17px;background:#e39d84"><b>102.8</b></div>
<div class="c" style="left:1576px;top:178px;width:46px;height:18px;line-height:17px;background:#e49d84"><b>103.0</b></div>
<div class="c" style="left:1622px;top:178px;width:47px;height:18px;line-height:17px;background:#dba585"><b>99.9</b></div>
<div class="c" style="left:1669px;top:178px;width:46px;height:18px;line-height:17px;background:#e0a085"><b>101.7</b></div>
<div class="rh" style="top:196px;height:18px;line-height:15px"><b>154.0</b></div>
<div class="c" style="left:972px;top:196px;width:46px;height:18px;line-height:17px;background:#aed189"><b>84.1</b></div>
<div class="c" style="left:1018px;top:196px;width:47px;height:18px;line-height:17px;background:#b5ca88"><b>86.6</b></div>
<div class="c" style="left:1065px;top:196px;width:46px;height:18px;line-height:17px;background:#bbc487"><b>88.8</b></div>
<div class="c" style="left:1111px;top:196px;width:47px;height:18px;line-height:17px;background:#b2cd88"><b>85.4</b></div>
<div class="c" style="left:1158px;top:196px;width:46px;height:18px;line-height:17px;background:#b0ce88"><b>84.9</b></div>
<div class="c" style="left:1204px;top:196px;width:47px;height:18px;line-height:17px;background:#c9b686"><b>93.7</b></div>
<div class="c" style="left:1251px;top:196px;width:46px;height:18px;line-height:17px;background:#dba585"><b>100.1</b></div>
<div class="c" style="left:1297px;top:196px;width:47px;height:18px;line-height:17px;background:#daa685"><b>99.7</b></div>
<div class="c" style="left:1344px;top:196px;width:46px;height:18px;line-height:17px;background:#dfa185"><b>101.3</b></div>
<div class="c" style="left:1390px;top:196px;width:46px;height:18px;line-height:17px;background:#e69a84"><b>104.0</b></div>
<div class="c" style="left:1436px;top:196px;width:47px;height:18px;line-height:17px;background:#eb9684"><b>105.6</b></div>
<div class="c" style="left:1483px;top:196px;width:46px;height:18px;line-height:17px;background:#e99884"><b>104.8</b></div>
<div class="c" style="left:1529px;top:196px;width:47px;height:18px;line-height:17px;background:#dea285"><b>100.9</b></div>
<div class="c" style="left:1576px;top:196px;width:46px;height:18px;line-height:17px;background:#e29e84"><b>102.6</b></div>
<div class="c" style="left:1622px;top:196px;width:47px;height:18px;line-height:17px;background:#e69a84"><b>104.0</b></div>
<div class="c" style="left:1669px;top:196px;width:46px;height:18px;line-height:17px;background:#d3ad86"><b>97.1</b></div>
<div class="rh" style="top:214px;height:18px;line-height:15px"><b>136.0</b></div>
<div class="c" style="left:972px;top:214px;width:46px;height:18px;line-height:17px;background:#99e58a"><b>76.7</b></div>
<div class="c" style="left:1018px;top:214px;width:47px;height:18px;line-height:17px;background:#a0de8a"><b>79.2</b></div>
<div class="c" style="left:1065px;top:214px;width:46px;height:18px;line-height:17px;background:#a6d889"><b>81.4</b></div>
<div class="c" style="left:1111px;top:214px;width:47px;height:18px;line-height:17px;background:#aed189"><b>83.9</b></div>
<div class="c" style="left:1158px;top:214px;width:46px;height:18px;line-height:17px;background:#bfc187"><b>89.9</b></div>
<div class="c" style="left:1204px;top:214px;width:47px;height:18px;line-height:17px;background:#c6b987"><b>92.6</b></div>
<div class="c" style="left:1251px;top:214px;width:46px;height:18px;line-height:17px;background:#d0b086"><b>96.0</b></div>
<div class="c" style="left:1297px;top:214px;width:47px;height:18px;line-height:17px;background:#ccb486"><b>94.7</b></div>
<div class="c" style="left:1344px;top:214px;width:46px;height:18px;line-height:17px;background:#cdb386"><b>95.0</b></div>
<div class="c" style="left:1390px;top:214px;width:46px;height:18px;line-height:17px;background:#d6aa85"><b>98.2</b></div>
<div class="c" style="left:1436px;top:214px;width:47px;height:18px;line-height:17px;background:#dda385"><b>100.8</b></div>
<div class="c" style="left:1483px;top:214px;width:46px;height:18px;line-height:17px;background:#e69a84"><b>103.9</b></div>
<div class="c" style="left:1529px;top:214px;width:47px;height:18px;line-height:17px;background:#d8a885"><b>98.9</b></div>
<div class="c" style="left:1576px;top:214px;width:46px;height:18px;line-height:17px;background:#d0b086"><b>96.1</b></div>
<div class="c" style="left:1622px;top:214px;width:47px;height:18px;line-height:17px;background:#d1af86"><b>96.3</b></div>
<div class="c" style="left:1669px;top:214px;width:46px;height:18px;line-height:17px;background:#c4bb87"><b>92.0</b></div>
<div class="rh" style="top:232px;height:18px;line-height:15px"><b>118.0</b></div>
<div class="c" style="left:972px;top:232px;width:46px;height:18px;line-height:17px;background:#99e58a"><b>76.7</b></div>
<div class="c" style="left:1018px;top:232px;width:47px;height:18px;line-height:17px;background:#a1de8a"><b>79.3</b></div>
<div class="c" style="left:1065px;top:232px;width:46px;height:18px;line-height:17px;background:#a7d889"><b>81.5</b></div>
<div class="c" style="left:1111px;top:232px;width:47px;height:18px;line-height:17px;background:#afd089"><b>84.3</b></div>
<div class="c" style="left:1158px;top:232px;width:46px;height:18px;line-height:17px;background:#b2cd88"><b>85.5</b></div>
<div class="c" style="left:1204px;top:232px;width:47px;height:18px;line-height:17px;background:#b9c688"><b>87.9</b></div>
<div class="c" style="left:1251px;top:232px;width:46px;height:18px;line-height:17px;background:#bbc488"><b>88.7</b></div>
<div class="c" style="left:1297px;top:232px;width:47px;height:18px;line-height:17px;background:#b8c788"><b>87.6</b></div>
<div class="c" style="left:1344px;top:232px;width:46px;height:18px;line-height:17px;background:#b3cb88"><b>86.0</b></div>
<div class="c" style="left:1390px;top:232px;width:46px;height:18px;line-height:17px;background:#bfc087"><b>90.0</b></div>
<div class="c" style="left:1436px;top:232px;width:47px;height:18px;line-height:17px;background:#c9b686"><b>93.7</b></div>
<div class="c" style="left:1483px;top:232px;width:46px;height:18px;line-height:17px;background:#c3bd87"><b>91.4</b></div>
<div class="c" style="left:1529px;top:232px;width:47px;height:18px;line-height:17px;background:#bdc387"><b>89.2</b></div>
<div class="c" style="left:1576px;top:232px;width:46px;height:18px;line-height:17px;background:#b9c688"><b>88.0</b></div>
<div class="c" style="left:1622px;top:232px;width:47px;height:18px;line-height:17px;background:#bbc588"><b>88.5</b></div>
<div class="c" style="left:1669px;top:232px;width:46px;height:18px;line-height:17px;background:#abd389"><b>83.1</b></div>
<div class="rh" style="top:250px;height:18px;line-height:15px"><b>100.0</b></div>
<div class="c" style="left:972px;top:250px;width:46px;height:18px;line-height:17px;background:#a0df8a"><b>79.0</b></div>
<div class="c" style="left:1018px;top:250px;width:47px;height:18px;line-height:17px;background:#a8d789"><b>81.8</b></div>
<div class="c" style="left:1065px;top:250px;width:46px;height:18px;line-height:17px;background:#bcc387"><b>89.1</b></div>
<div class="c" style="left:1111px;top:250px;width:47px;height:18px;line-height:17px;background:#bec287"><b>89.6</b></div>
<div class="c" style="left:1158px;top:250px;width:46px;height:18px;line-height:17px;background:#b3cb88"><b>86.0</b></div>
<div class="c" style="left:1204px;top:250px;width:47px;height:18px;line-height:17px;background:#b3cb88"><b>86.0</b></div>
<div class="c" style="left:1251px;top:250px;width:46px;height:18px;line-height:17px;background:#b6c988"><b>86.8</b></div>
<div class="c" style="left:1297px;top:250px;width:47px;height:18px;line-height:17px;background:#add289"><b>83.7</b></div>
<div class="c" style="left:1344px;top:250px;width:46px;height:18px;line-height:17px;background:#add289"><b>83.6</b></div>
<div class="c" style="left:1390px;top:250px;width:46px;height:18px;line-height:17px;background:#b6c988"><b>87.0</b></div>
<div class="c" style="left:1436px;top:250px;width:47px;height:18px;line-height:17px;background:#bdc287"><b>89.3</b></div>
<div class="c" style="left:1483px;top:250px;width:46px;height:18px;line-height:17px;background:#b7c888"><b>87.1</b></div>
<div class="c" style="left:1529px;top:250px;width:47px;height:18px;line-height:17px;background:#b7c888"><b>87.3</b></div>
<div class="c" style="left:1576px;top:250px;width:46px;height:18px;line-height:17px;background:#afd088"><b>84.5</b></div>
<div class="c" style="left:1622px;top:250px;width:47px;height:18px;line-height:17px;background:#b5ca88"><b>86.4</b></div>
<div class="c" style="left:1669px;top:250px;width:46px;height:18px;line-height:17px;background:#a5da89"><b>80.9</b></div>
<div class="rh" style="top:268px;height:18px;line-height:15px"><b>95.0</b></div>
<div class="c" style="left:972px;top:268px;width:46px;height:18px;line-height:17px;background:#94ea8b"><b>75.0</b></div>
<div class="c" style="left:1018px;top:268px;width:47px;height:18px;line-height:17px;background:#9fdf8a"><b>78.8</b></div>
<div class="c" style="left:1065px;top:268px;width:46px;height:18px;line-height:17px;background:#b3cb88"><b>86.0</b></div>
<div class="c" style="left:1111px;top:268px;width:47px;height:18px;line-height:17px;background:#bac588"><b>88.3</b></div>
<div class="c" style="left:1158px;top:268px;width:46px;height:18px;line-height:17px;background:#a7d889"><b>81.5</b></div>
<div class="c" style="left:1204px;top:268px;width:47px;height:18px;line-height:17px;background:#a2dd8a"><b>79.7</b></div>
<div class="c" style="left:1251px;top:268px;width:46px;height:18px;line-height:17px;background:#aad589"><b>82.6</b></div>
<div class="c" style="left:1297px;top:268px;width:47px;height:18px;line-height:17px;background:#a4db89"><b>80.5</b></div>
<div class="c" style="left:1344px;top:268px;width:46px;height:18px;line-height:17px;background:#a9d689"><b>82.2</b></div>
<div class="c" style="left:1390px;top:268px;width:46px;height:18px;line-height:17px;background:#b4cb88"><b>86.3</b></div>
<div class="c" style="left:1436px;top:268px;width:47px;height:18px;line-height:17px;background:#b2cd88"><b>85.4</b></div>
<div class="c" style="left:1483px;top:268px;width:46px;height:18px;line-height:17px;background:#a5d989"><b>81.0</b></div>
<div class="c" style="left:1529px;top:268px;width:47px;height:18px;line-height:17px;background:#acd389"><b>83.2</b></div>
<div class="c" style="left:1576px;top:268px;width:46px;height:18px;line-height:17px;background:#a5da89"><b>80.9</b></div>
<div class="c" style="left:1622px;top:268px;width:47px;height:18px;line-height:17px;background:#abd489"><b>82.9</b></div>
<div class="c" style="left:1669px;top:268px;width:46px;height:18px;line-height:17px;background:#a4db89"><b>80.5</b></div>
<div class="rh" style="top:286px;height:18px;line-height:15px"><b>85.0</b></div>
<div class="c" style="left:972px;top:286px;width:46px;height:18px;line-height:17px;background:#92ec8b"><b>74.2</b></div>
<div class="c" style="left:1018px;top:286px;width:47px;height:18px;line-height:17px;background:#aad489"><b>82.8</b></div>
<div class="c" style="left:1065px;top:286px;width:46px;height:18px;line-height:17px;background:#b8c788"><b>87.6</b></div>
<div class="c" style="left:1111px;top:286px;width:47px;height:18px;line-height:17px;background:#9ce28a"><b>77.8</b></div>
<div class="c" style="left:1158px;top:286px;width:46px;height:18px;line-height:17px;background:#a0df8a"><b>79.0</b></div>
<div class="c" style="left:1204px;top:286px;width:47px;height:18px;line-height:17px;background:#a7d889"><b>81.6</b></div>
<div class="c" style="left:1251px;top:286px;width:46px;height:18px;line-height:17px;background:#a3db89"><b>80.3</b></div>
<div class="c" style="left:1297px;top:286px;width:47px;height:18px;line-height:17px;background:#97e78a"><b>75.9</b></div>
<div class="c" style="left:1344px;top:286px;width:46px;height:18px;line-height:17px;background:#9fe08a"><b>78.7</b></div>
<div class="c" style="left:1390px;top:286px;width:46px;height:18px;line-height:17px;background:#add289"><b>83.8</b></div>
<div class="c" style="left:1436px;top:286px;width:47px;height:18px;line-height:17px;background:#b3cc88"><b>85.8</b></div>
<div class="c" style="left:1483px;top:286px;width:46px;height:18px;line-height:17px;background:#b0cf88"><b>84.7</b></div>
<div class="c" style="left:1529px;top:286px;width:47px;height:18px;line-height:17px;background:#a7d889"><b>81.6</b></div>
<div class="c" style="left:1576px;top:286px;width:46px;height:18px;line-height:17px;background:#a3dc89"><b>80.0</b></div>
<div class="c" style="left:1622px;top:286px;width:47px;height:18px;line-height:17px;background:#9be38a"><b>77.4</b></div>
<div class="c" style="left:1669px;top:286px;width:46px;height:18px;line-height:17px;background:#90ec8d"><b>72.8</b></div>
<div class="rh" style="top:304px;height:18px;line-height:15px"><b>75.0</b></div>
<div class="c" style="left:972px;top:304px;width:46px;height:18px;line-height:17px;background:#8fe199"><b>68.8</b></div>
<div class="c" style="left:1018px;top:304px;width:47px;height:18px;line-height:17px;background:#99e68a"><b>76.5</b></div>
<div class="c" style="left:1065px;top:304px;width:46px;height:18px;line-height:17px;background:#b9c688"><b>87.9</b></div>
<div class="c" style="left:1111px;top:304px;width:47px;height:18px;line-height:17px;background:#aad489"><b>82.8</b></div>
<div class="c" style="left:1158px;top:304px;width:46px;height:18px;line-height:17px;background:#95e98b"><b>75.1</b></div>
<div class="c" style="left:1204px;top:304px;width:47px;height:18px;line-height:17px;background:#94ea8b"><b>74.8</b></div>
<div class="c" style="left:1251px;top:304px;width:46px;height:18px;line-height:17px;background:#96e88b"><b>75.5</b></div>
<div class="c" style="left:1297px;top:304px;width:47px;height:18px;line-height:17px;background:#90ec8d"><b>72.7</b></div>
<div class="c" style="left:1344px;top:304px;width:46px;height:18px;line-height:17px;background:#97e78a"><b>76.1</b></div>
<div class="c" style="left:1390px;top:304px;width:46px;height:18px;line-height:17px;background:#9fe08a"><b>78.6</b></div>
<div class="c" style="left:1436px;top:304px;width:47px;height:18px;line-height:17px;background:#a3dc89"><b>80.1</b></div>
<div class="c" style="left:1483px;top:304px;width:46px;height:18px;line-height:17px;background:#a1dd8a"><b>79.5</b></div>
<div class="c" style="left:1529px;top:304px;width:47px;height:18px;line-height:17px;background:#9ae58a"><b>76.9</b></div>
<div class="c" style="left:1576px;top:304px;width:46px;height:18px;line-height:17px;background:#96e88b"><b>75.5</b></div>
<div class="c" style="left:1622px;top:304px;width:47px;height:18px;line-height:17px;background:#90ed8c"><b>73.0</b></div>
<div class="c" style="left:1669px;top:304px;width:46px;height:18px;line-height:17px;background:#8fe694"><b>70.5</b></div>
<div class="rh" style="top:322px;height:18px;line-height:15px"><b>65.0</b></div>
<div class="c" style="left:972px;top:322px;width:46px;height:18px;line-height:17px;background:#8ed2a9"><b>63.3</b></div>
<div class="c" style="left:1018px;top:322px;width:47px;height:18px;line-height:17px;background:#8fe793"><b>70.8</b></div>
<div class="c" style="left:1065px;top:322px;width:46px;height:18px;line-height:17px;background:#96e88a"><b>75.7</b></div>
<div class="c" style="left:1111px;top:322px;width:47px;height:18px;line-height:17px;background:#95e98b"><b>75.1</b></div>
<div class="c" style="left:1158px;top:322px;width:46px;height:18px;line-height:17px;background:#8fe892"><b>71.1</b></div>
<div class="c" style="left:1204px;top:322px;width:47px;height:18px;line-height:17px;background:#8fe397"><b>69.4</b></div>
<div class="c" style="left:1251px;top:322px;width:46px;height:18px;line-height:17px;background:#92ec8b"><b>74.0</b></div>
<div class="c" style="left:1297px;top:322px;width:47px;height:18px;line-height:17px;background:#8fdf9b"><b>67.9</b></div>
<div class="c" style="left:1344px;top:322px;width:46px;height:18px;line-height:17px;background:#8fe298"><b>69.1</b></div>
<div class="c" style="left:1390px;top:322px;width:46px;height:18px;line-height:17px;background:#96e88a"><b>75.7</b></div>
<div class="c" style="left:1436px;top:322px;width:47px;height:18px;line-height:17px;background:#98e68a"><b>76.4</b></div>
<div class="c" style="left:1483px;top:322px;width:46px;height:18px;line-height:17px;background:#9ae48a"><b>77.1</b></div>
<div class="c" style="left:1529px;top:322px;width:47px;height:18px;line-height:17px;background:#8fe09a"><b>68.3</b></div>
<div class="c" style="left:1576px;top:322px;width:46px;height:18px;line-height:17px;background:#8fe396"><b>69.6</b></div>
<div class="c" style="left:1622px;top:322px;width:47px;height:18px;line-height:17px;background:#8fe694"><b>70.5</b></div>
<div class="c" style="left:1669px;top:322px;width:46px;height:18px;line-height:17px;background:#90e991"><b>71.5</b></div>
<div class="rh" style="top:340px;height:18px;line-height:15px"><b>55.0</b></div>
<div class="c" style="left:972px;top:340px;width:46px;height:18px;line-height:17px;background:#8edb9f"><b>66.6</b></div>
<div class="c" style="left:1018px;top:340px;width:47px;height:18px;line-height:17px;background:#91ed8b"><b>73.8</b></div>
<div class="c" style="left:1065px;top:340px;width:46px;height:18px;line-height:17px;background:#8edc9f"><b>66.8</b></div>
<div class="c" style="left:1111px;top:340px;width:47px;height:18px;line-height:17px;background:#8fe09b"><b>68.2</b></div>
<div class="c" style="left:1158px;top:340px;width:46px;height:18px;line-height:17px;background:#8fde9d"><b>67.5</b></div>
<div class="c" style="left:1204px;top:340px;width:47px;height:18px;line-height:17px;background:#8ed6a5"><b>64.6</b></div>
<div class="c" style="left:1251px;top:340px;width:46px;height:18px;line-height:17px;background:#8fe594"><b>70.3</b></div>
<div class="c" style="left:1297px;top:340px;width:47px;height:18px;line-height:17px;background:#8ed6a5"><b>64.6</b></div>
<div class="c" style="left:1344px;top:340px;width:46px;height:18px;line-height:17px;background:#8fdd9d"><b>67.2</b></div>
<div class="c" style="left:1390px;top:340px;width:46px;height:18px;line-height:17px;background:#8fe595"><b>70.0</b></div>
<div class="c" style="left:1436px;top:340px;width:47px;height:18px;line-height:17px;background:#90ea90"><b>71.9</b></div>
<div class="c" style="left:1483px;top:340px;width:46px;height:18px;line-height:17px;background:#90ec8d"><b>72.9</b></div>
<div class="c" style="left:1529px;top:340px;width:47px;height:18px;line-height:17px;background:#8ed4a7"><b>64.1</b></div>
<div class="c" style="left:1576px;top:340px;width:46px;height:18px;line-height:17px;background:#8ed8a3"><b>65.4</b></div>
<div class="c" style="left:1622px;top:340px;width:47px;height:18px;line-height:17px;background:#8edba0"><b>66.4</b></div>
<div class="c" style="left:1669px;top:340px;width:46px;height:18px;line-height:17px;background:#8fdd9d"><b>67.4</b></div>
<div class="rh" style="top:358px;height:18px;line-height:15px"><b>45.0</b></div>
<div class="c" style="left:972px;top:358px;width:46px;height:18px;line-height:17px;background:#8dcdaf"><b>61.3</b></div>
<div class="c" style="left:1018px;top:358px;width:47px;height:18px;line-height:17px;background:#8ed8a2"><b>65.5</b></div>
<div class="c" style="left:1065px;top:358px;width:46px;height:18px;line-height:17px;background:#8fdf9b"><b>67.9</b></div>
<div class="c" style="left:1111px;top:358px;width:47px;height:18px;line-height:17px;background:#8edc9f"><b>66.8</b></div>
<div class="c" style="left:1158px;top:358px;width:46px;height:18px;line-height:17px;background:#8dcbb1"><b>60.6</b></div>
<div class="c" style="left:1204px;top:358px;width:47px;height:18px;line-height:17px;background:#8dcbb0"><b>60.8</b></div>
<div class="c" style="left:1251px;top:358px;width:46px;height:18px;line-height:17px;background:#8fde9c"><b>67.7</b></div>
<div class="c" style="left:1297px;top:358px;width:47px;height:18px;line-height:17px;background:#8edb9f"><b>66.6</b></div>
<div class="c" style="left:1344px;top:358px;width:46px;height:18px;line-height:17px;background:#8edba0"><b>66.4</b></div>
<div class="c" style="left:1390px;top:358px;width:46px;height:18px;line-height:17px;background:#90ee8b"><b>73.6</b></div>
<div class="c" style="left:1436px;top:358px;width:47px;height:18px;line-height:17px;background:#9be48a"><b>77.2</b></div>
<div class="c" style="left:1483px;top:358px;width:46px;height:18px;line-height:17px;background:#95e98b"><b>75.2</b></div>
<div class="c" style="left:1529px;top:358px;width:47px;height:18px;line-height:17px;background:#8fe693"><b>70.7</b></div>
<div class="c" style="left:1576px;top:358px;width:46px;height:18px;line-height:17px;background:#8fe09a"><b>68.4</b></div>
<div class="c" style="left:1622px;top:358px;width:47px;height:18px;line-height:17px;background:#8edaa0"><b>66.2</b></div>
<div class="c" style="left:1669px;top:358px;width:46px;height:18px;line-height:17px;background:#8ed2a9"><b>63.4</b></div>
<div class="rh" style="top:376px;height:18px;line-height:15px"><b>35.0</b></div>
<div class="c" style="left:972px;top:376px;width:46px;height:18px;line-height:17px;background:#8dcfac"><b>62.2</b></div>
<div class="c" style="left:1018px;top:376px;width:47px;height:18px;line-height:17px;background:#8ed1aa"><b>62.9</b></div>
<div class="c" style="left:1065px;top:376px;width:46px;height:18px;line-height:17px;background:#8dcfac"><b>62.2</b></div>
<div class="c" style="left:1111px;top:376px;width:47px;height:18px;line-height:17px;background:#90e990"><b>71.8</b></div>
<div class="c" style="left:1158px;top:376px;width:46px;height:18px;line-height:17px;background:#8dcfac"><b>62.3</b></div>
<div class="c" style="left:1204px;top:376px;width:47px;height:18px;line-height:17px;background:#8dcdae"><b>61.6</b></div>
<div class="c" style="left:1251px;top:376px;width:46px;height:18px;line-height:17px;background:#90e891"><b>71.4</b></div>
<div class="c" style="left:1297px;top:376px;width:47px;height:18px;line-height:17px;background:#8ed8a2"><b>65.6</b></div>
<div class="c" style="left:1344px;top:376px;width:46px;height:18px;line-height:17px;background:#8fe397"><b>69.5</b></div>
<div class="c" style="left:1390px;top:376px;width:46px;height:18px;line-height:17px;background:#90e990"><b>71.8</b></div>
<div class="c" style="left:1436px;top:376px;width:47px;height:18px;line-height:17px;background:#92ec8b"><b>74.3</b></div>
<div class="c" style="left:1483px;top:376px;width:46px;height:18px;line-height:17px;background:#90ee8b"><b>73.3</b></div>
<div class="c" style="left:1529px;top:376px;width:47px;height:18px;line-height:17px;background:#8edba0"><b>66.5</b></div>
<div class="c" style="left:1576px;top:376px;width:46px;height:18px;line-height:17px;background:#8ed5a6"><b>64.3</b></div>
<div class="c" style="left:1622px;top:376px;width:47px;height:18px;line-height:17px;background:#8dcfac"><b>62.2</b></div>
<div class="c" style="left:1669px;top:376px;width:46px;height:18px;line-height:17px;background:#8dc7b5"><b>59.4</b></div>
<div class="rh" style="top:394px;height:18px;line-height:15px"><b>30.0</b></div>
<div class="c" style="left:972px;top:394px;width:46px;height:18px;line-height:17px;background:#8bb6c7"><b>53.0</b></div>
<div class="c" style="left:1018px;top:394px;width:47px;height:18px;line-height:17px;background:#8dcab2"><b>60.4</b></div>
<div class="c" style="left:1065px;top:394px;width:46px;height:18px;line-height:17px;background:#8ed5a6"><b>64.3</b></div>
<div class="c" style="left:1111px;top:394px;width:47px;height:18px;line-height:17px;background:#8ed6a5"><b>64.6</b></div>
<div class="c" style="left:1158px;top:394px;width:46px;height:18px;line-height:17px;background:#8cbac3"><b>54.5</b></div>
<div class="c" style="left:1204px;top:394px;width:47px;height:18px;line-height:17px;background:#8cc1bb"><b>57.2</b></div>
<div class="c" style="left:1251px;top:394px;width:46px;height:18px;line-height:17px;background:#8fdd9d"><b>67.4</b></div>
<div class="c" style="left:1297px;top:394px;width:47px;height:18px;line-height:17px;background:#8dccaf"><b>61.2</b></div>
<div class="c" style="left:1344px;top:394px;width:46px;height:18px;line-height:17px;background:#8fe496"><b>69.7</b></div>
<div class="c" style="left:1390px;top:394px;width:46px;height:18px;line-height:17px;background:#8ed5a5"><b>64.5</b></div>
<div class="c" style="left:1436px;top:394px;width:47px;height:18px;line-height:17px;background:#8ed0ab"><b>62.7</b></div>
<div class="c" style="left:1483px;top:394px;width:46px;height:18px;line-height:17px;background:#8ed8a3"><b>65.3</b></div>
<div class="c" style="left:1529px;top:394px;width:47px;height:18px;line-height:17px;background:#8ed5a6"><b>64.3</b></div>
<div class="c" style="left:1576px;top:394px;width:46px;height:18px;line-height:17px;background:#8dcab2"><b>60.3</b></div>
<div class="c" style="left:1622px;top:394px;width:47px;height:18px;line-height:17px;background:#8cbfbe"><b>56.3</b></div>
<div class="c" style="left:1669px;top:394px;width:46px;height:18px;line-height:17px;background:#8cc2bb"><b>57.3</b></div>
<div class="rh" style="top:412px;height:18px;line-height:15px"><b>25.0</b></div>
<div class="c" style="left:972px;top:412px;width:46px;height:18px;line-height:17px;background:#8bb6c7"><b>53.1</b></div>
<div class="c" style="left:1018px;top:412px;width:47px;height:18px;line-height:17px;background:#8dc5b7"><b>58.4</b></div>
<div class="c" style="left:1065px;top:412px;width:46px;height:18px;line-height:17px;background:#8edaa1"><b>66.0</b></div>
<div class="c" style="left:1111px;top:412px;width:47px;height:18px;line-height:17px;background:#8dcab2"><b>60.4</b></div>
<div class="c" style="left:1158px;top:412px;width:46px;height:18px;line-height:17px;background:#8aabd3"><b>49.1</b></div>
<div class="c" style="left:1204px;top:412px;width:47px;height:18px;line-height:17px;background:#8aa4db"><b>46.5</b></div>
<div class="c" style="left:1251px;top:412px;width:46px;height:18px;line-height:17px;background:#8bb7c7"><b>53.3</b></div>
<div class="c" style="left:1297px;top:412px;width:47px;height:18px;line-height:17px;background:#8cbbc2"><b>55.0</b></div>
<div class="c" style="left:1344px;top:412px;width:46px;height:18px;line-height:17px;background:#8bafcf"><b>50.5</b></div>
<div class="c" style="left:1390px;top:412px;width:46px;height:18px;line-height:17px;background:#8cbcc1"><b>55.1</b></div>
<div class="c" style="left:1436px;top:412px;width:47px;height:18px;line-height:17px;background:#89a0df"><b>45.1</b></div>
<div class="c" style="left:1483px;top:412px;width:46px;height:18px;line-height:17px;background:#8bb6c7"><b>53.2</b></div>
<div class="c" style="left:1529px;top:412px;width:47px;height:18px;line-height:17px;background:#8dcfad"><b>62.1</b></div>
<div class="c" style="left:1576px;top:412px;width:46px;height:18px;line-height:17px;background:#8aa2dc"><b>46.0</b></div>
<div class="c" style="left:1622px;top:412px;width:47px;height:18px;line-height:17px;background:#8aa7d8"><b>47.5</b></div>
<div class="c" style="left:1669px;top:412px;width:46px;height:18px;line-height:17px;background:#8cbcc1"><b>55.2</b></div>
<div class="rh" style="top:430px;height:18px;line-height:15px"><b>15.0</b></div>
<div class="c" style="left:972px;top:430px;width:46px;height:18px;line-height:17px;background:#8bb5c8"><b>52.7</b></div>
<div class="c" style="left:1018px;top:430px;width:47px;height:18px;line-height:17px;background:#8bb5c8"><b>52.8</b></div>
<div class="c" style="left:1065px;top:430px;width:46px;height:18px;line-height:17px;background:#8bb2cc"><b>51.6</b></div>
<div class="c" style="left:1111px;top:430px;width:47px;height:18px;line-height:17px;background:#8bb2cb"><b>51.8</b></div>
<div class="c" style="left:1158px;top:430px;width:46px;height:18px;line-height:17px;background:#8bafcf"><b>50.5</b></div>
<div class="c" style="left:1204px;top:430px;width:47px;height:18px;line-height:17px;background:#899de2"><b>44.0</b></div>
<div class="c" style="left:1251px;top:430px;width:46px;height:18px;line-height:17px;background:#899ae5"><b>43.0</b></div>
<div class="c" style="left:1297px;top:430px;width:47px;height:18px;line-height:17px;background:#899de2"><b>44.1</b></div>
<div class="c" style="left:1344px;top:430px;width:46px;height:18px;line-height:17px;background:#8bacd1"><b>49.6</b></div>
<div class="c" style="left:1390px;top:430px;width:46px;height:18px;line-height:17px;background:#899ee1"><b>44.5</b></div>
<div class="c" style="left:1436px;top:430px;width:47px;height:18px;line-height:17px;background:#8782ff"><b>34.2</b></div>
<div class="c" style="left:1483px;top:430px;width:46px;height:18px;line-height:17px;background:#8aabd3"><b>49.2</b></div>
<div class="c" style="left:1529px;top:430px;width:47px;height:18px;line-height:17px;background:#8cbfbe"><b>56.3</b></div>
<div class="c" style="left:1576px;top:430px;width:46px;height:18px;line-height:17px;background:#8aa2dd"><b>45.8</b></div>
<div class="c" style="left:1622px;top:430px;width:47px;height:18px;line-height:17px;background:#8bacd2"><b>49.5</b></div>
<div class="c" style="left:1669px;top:430px;width:46px;height:18px;line-height:17px;background:#8bb1cc"><b>51.3</b></div>
<div class="a" style="left:969.5px;top:160px;width:1.5px;height:288px;background:#6c7b8e"></div>
<div class="a" style="left:971px;top:160px;width:1px;height:288px;background:#dfe3df"></div>
<div class="a" style="left:971px;top:446px;width:745px;height:2px;background:#f6f6f6"></div>
<div class="a" style="left:924px;top:447px;width:48px;height:1px;background:#f6f6f6"></div>
<div class="a" style="left:924px;top:447px;width:47px;height:17px;background:#efefef;border:1px solid #9c9c9c"></div>
<svg class="a" style="left:937px;top:447px" width="20" height="17" viewBox="0 0 20 17"><g fill="#bdbdbd"><path d="M4.600 4h2.200v7.900H15v2.200H4.600z"/><path d="M5.700 0L9.300 4.600H2.100z"/><path d="M18.800 13L14.200 16.600V9.400z"/></g></svg>
<div class="ch" style="left:973px;top:447px;width:45px;height:17px;line-height:15px"><b>500</b></div>
<div class="ch" style="left:1019px;top:447px;width:46px;height:17px;line-height:15px"><b>700</b></div>
<div class="ch" style="left:1066px;top:447px;width:45px;height:17px;line-height:15px"><b>900</b></div>
<div class="ch" style="left:1112px;top:447px;width:46px;height:17px;line-height:15px"><b>1300</b></div>
<div class="ch" style="left:1159px;top:447px;width:45px;height:17px;line-height:15px"><b>1700</b></div>
<div class="ch" style="left:1205px;top:447px;width:46px;height:17px;line-height:15px"><b>2200</b></div>
<div class="ch" style="left:1252px;top:447px;width:45px;height:17px;line-height:15px"><b>2700</b></div>
<div class="ch" style="left:1298px;top:447px;width:46px;height:17px;line-height:15px"><b>3300</b></div>
<div class="ch" style="left:1345px;top:447px;width:45px;height:17px;line-height:15px"><b>3800</b></div>
<div class="ch" style="left:1391px;top:447px;width:45px;height:17px;line-height:15px"><b>4300</b></div>
<div class="ch" style="left:1437px;top:447px;width:46px;height:17px;line-height:15px"><b>4800</b></div>
<div class="ch" style="left:1484px;top:447px;width:45px;height:17px;line-height:15px"><b>5200</b></div>
<div class="ch" style="left:1530px;top:447px;width:46px;height:17px;line-height:15px"><b>5700</b></div>
<div class="ch" style="left:1577px;top:447px;width:45px;height:17px;line-height:15px"><b>6200</b></div>
<div class="ch" style="left:1623px;top:447px;width:46px;height:17px;line-height:15px"><b>6600</b></div>
<div class="ch" style="left:1670px;top:447px;width:45px;height:17px;line-height:15px"><b>7000</b></div>
<div class="a sb" style="left:1291px;top:470px;width:40px;text-align:center;font-size:12px;line-height:16px;color:#222">rpm</div>
<div class="yl" style="top:205px">f</div>
<div class="yl" style="top:220px">u</div>
<div class="yl" style="top:235px">e</div>
<div class="yl" style="top:250px">l</div>
<div class="yl" style="top:265px">l</div>
<div class="yl" style="top:280px">o</div>
<div class="yl" style="top:295px">a</div>
<div class="yl" style="top:310px">d</div>
<div class="yl" style="top:340px">k</div>
<div class="yl" style="top:355px">p</div>
<div class="yl" style="top:370px">a</div>
<div class="a" style="left:902px;top:485px;width:817px;height:1px;background:#a4a4a4"></div>
<div class="a" style="left:902px;top:486px;width:817px;height:2px;background:#fbfbfb"></div>
<div class="a" style="left:902px;top:488px;width:817px;height:1px;background:#a8a8a8"></div>
<div class="a" style="left:902px;top:489px;width:817px;height:1px;background:#fbfbfb"></div>
<div class="a" style="left:903px;top:502px;line-height:0"><svg width="12" height="12" viewBox="0 0 13 13"><rect x="0.500" y="0.500" width="12" height="12" rx="2.500" fill="#0a56c8" stroke="#003c9e"/><text x="6.500" y="10.500" font-size="11" font-weight="bold" fill="#fff" text-anchor="middle" font-family="Liberation Sans, Arial, sans-serif">?</text></svg></div>
<div class="a" style="left:923px;top:494px;width:792px;height:49px;border-left:1px solid #fbfbfb;border-bottom:1px solid #fbfbfb;border-top:1px solid #e4e4e4;background:#eeeeee"><div class="a" style="left:10px;top:11px;width:13px;height:13px;border:1px solid #8e9aaa;background:linear-gradient(#f6f8fb,#c9dbef)"></div><div class="a sb" style="left:27px;top:10px;letter-spacing:-0.22px;font-size:12px;line-height:16px;white-space:nowrap;color:#222">Follow Mode</div></div>
<div class="a" style="left:923px;top:544px;width:792px;height:1px;background:#dcdcdc"></div>
<div class="tb" style="left:1128px;top:495px;width:46px;height:46px"><div class="a" style="left:14px;top:14px;width:16px;height:16px;line-height:0"><svg width="16" height="16" viewBox="0 0 16 16"><circle cx="8.300" cy="8.300" r="7.500" fill="#49a828"/><circle cx="7.800" cy="7.800" r="7.400" fill="#9be45c"/><circle cx="8.200" cy="8.100" r="7" fill="#5fce33"/><path d="M8 2.500L13 8.200H10.200V13.200H5.800V8.200H3z" fill="#fff" transform="rotate(-16 8 8)"/></svg></div></div>
<div class="tb" style="left:1177px;top:495px;width:46px;height:46px"><div class="a" style="left:14px;top:14px;width:16px;height:16px;line-height:0"><svg width="16" height="16" viewBox="0 0 16 16"><circle cx="8.300" cy="8.300" r="7.500" fill="#49a828"/><circle cx="7.800" cy="7.800" r="7.400" fill="#9be45c"/><circle cx="8.200" cy="8.100" r="7" fill="#5fce33"/><path d="M8 13.500L3 7.800H5.800V2.800H10.200V7.800H13z" fill="#fff" transform="rotate(-16 8 8)"/></svg></div></div>
<div class="tb" style="left:1226px;top:495px;width:46px;height:46px"><div class="a" style="left:14px;top:14px;width:16px;height:16px;line-height:0"><svg width="16" height="16" viewBox="0 0 16 16"><circle cx="8" cy="8" r="8" fill="#000"/><path d="M4 6.100h8M4 9.200h8" stroke="#fff" stroke-width="1.800"/></svg></div></div>
<div class="tb" style="left:1275px;top:495px;width:46px;height:46px"><div class="a" style="left:14px;top:14px;width:16px;height:16px;line-height:0"><svg width="16" height="16" viewBox="0 0 16 16"><rect width="16" height="16" rx="1.500" fill="#000"/><path d="M8 13.800V4.500M3.200 8.800L8 4 12.800 8.800" fill="none" stroke="#fff" stroke-width="2.100"/></svg></div></div>
<div class="tb" style="left:1324px;top:495px;width:46px;height:46px"><div class="a" style="left:14px;top:14px;width:16px;height:16px;line-height:0"><svg width="16" height="16" viewBox="0 0 16 16"><rect width="16" height="16" rx="1.500" fill="#000"/><path d="M8 2.200V11.500M3.200 7.200L8 12 12.800 7.200" fill="none" stroke="#fff" stroke-width="2.100"/></svg></div></div>
<div class="tb" style="left:1373px;top:495px;width:46px;height:46px"><div class="a" style="left:14px;top:14px;width:16px;height:16px;line-height:0"><svg width="16" height="16" viewBox="0 0 16 16"><circle cx="8" cy="8" r="8" fill="#000"/><path d="M2.400 8h11.200" stroke="#fff" stroke-width="2.900"/></svg></div></div>
<div class="tb" style="left:1422px;top:495px;width:46px;height:46px"><div class="a" style="left:14px;top:14px;width:16px;height:16px;line-height:0"><svg width="16" height="16" viewBox="0 0 16 16"><circle cx="8" cy="8" r="8" fill="#000"/><path d="M3 8h10M8 3v10" stroke="#fff" stroke-width="2.500"/></svg></div></div>
<div class="tb" style="left:1471px;top:495px;width:46px;height:46px"><div class="a" style="left:14px;top:14px;width:16px;height:16px;line-height:0"><svg width="16" height="16" viewBox="0 0 16 16"><circle cx="8" cy="8" r="8" fill="#000"/><path d="M3.400 3.400l9.200 9.200M12.600 3.400l-9.200 9.200" stroke="#fff" stroke-width="2.400"/></svg></div></div>
<div class="tb" style="left:1520px;top:495px;width:46px;height:46px"><div class="a" style="left:14px;top:14px;width:16px;height:16px;line-height:0"><svg width="16" height="16" viewBox="0 0 16 16"><defs><linearGradient id="ip2" x1="0" y1="1" x2="1" y2="0"><stop offset="0.15" stop-color="#ff0000"/><stop offset="0.85" stop-color="#0000ff"/></linearGradient></defs><path d="M4.200 11.700L11.800 4.700" stroke="url(#ip2)" stroke-width="3.300" stroke-linecap="round"/></svg></div></div>
<div class="tbd" style="left:1569px;top:495px;width:46px;height:46px"><div class="a" style="left:14px;top:14px;width:16px;height:16px;line-height:0"><svg width="16" height="16" viewBox="0 0 16 16"><path d="M0 2h16M0 8h16M0 14h16" stroke="#bdbdbd" stroke-width="3.600"/></svg></div></div>
<div class="tbd" style="left:1618px;top:495px;width:46px;height:46px"><div class="a" style="left:14px;top:14px;width:16px;height:16px;line-height:0"><svg width="16" height="16" viewBox="0 0 16 16"><path d="M2 0v16M8 0v16M14 0v16" stroke="#bdbdbd" stroke-width="3.600"/></svg></div></div>
<div class="tbd" style="left:1667px;top:495px;width:46px;height:46px"><div class="a" style="left:14px;top:14px;width:16px;height:16px;line-height:0"><svg width="16" height="16" viewBox="0 0 16 16"><rect width="16" height="16" fill="#bdbdbd"/></svg></div></div>
<div class="rh" style="top:545px;height:16px;line-height:13px"><b>210.0</b></div>
<div class="c" style="left:972px;top:545px;width:46px;height:16px;line-height:15px;background:#c3bd87"><b>91.4</b></div>
<div class="c" style="left:1018px;top:545px;width:47px;height:16px;line-height:15px;background:#cab686"><b>93.9</b></div>
<div class="c" style="left:1065px;top:545px;width:46px;height:16px;line-height:15px;background:#d0af86"><b>96.2</b></div>
<div class="c" style="left:1111px;top:545px;width:47px;height:16px;line-height:15px;background:#bfc087"><b>90.0</b></div>
<div class="c" style="left:1158px;top:545px;width:46px;height:16px;line-height:15px;background:#c2be87"><b>91.0</b></div>
<div class="c" style="left:1204px;top:545px;width:47px;height:16px;line-height:15px;background:#c6ba87"><b>92.5</b></div>
<div class="c" style="left:1251px;top:545px;width:46px;height:16px;line-height:15px;background:#d3ad86"><b>97.1</b></div>
<div class="c" style="left:1297px;top:545px;width:47px;height:16px;line-height:15px;background:#f78983"><b>110.0</b></div>
<div class="c" style="left:1344px;top:545px;width:46px;height:16px;line-height:15px;background:#ed9383"><b>106.5</b></div>
<div class="c" style="left:1390px;top:545px;width:46px;height:16px;line-height:15px;background:#f28e83"><b>108.2</b></div>
<div class="c" style="left:1436px;top:545px;width:47px;height:16px;line-height:15px;background:#ed9483"><b>106.3</b></div>
<div class="c" style="left:1483px;top:545px;width:46px;height:16px;line-height:15px;background:#e49d84"><b>103.0</b></div>
<div class="c" style="left:1529px;top:545px;width:47px;height:16px;line-height:15px;background:#e39d84"><b>102.8</b></div>
<div class="c" style="left:1576px;top:545px;width:46px;height:16px;line-height:15px;background:#e39d84"><b>102.9</b></div>
<div class="c" style="left:1622px;top:545px;width:47px;height:16px;line-height:15px;background:#d9a785"><b>99.2</b></div>
<div class="c" style="left:1669px;top:545px;width:46px;height:16px;line-height:15px;background:#dea285"><b>101.0</b></div>
<div class="rh" style="top:561px;height:16px;line-height:13px"><b>180.0</b></div>
<div class="c" style="left:972px;top:561px;width:46px;height:16px;line-height:15px;background:#bcc387"><b>89.0</b></div>
<div class="c" style="left:1018px;top:561px;width:47px;height:16px;line-height:15px;background:#c3bc87"><b>91.5</b></div>
<div class="c" style="left:1065px;top:561px;width:46px;height:16px;line-height:15px;background:#cab686"><b>93.8</b></div>
<div class="c" style="left:1111px;top:561px;width:47px;height:16px;line-height:15px;background:#b8c788"><b>87.5</b></div>
<div class="c" style="left:1158px;top:561px;width:46px;height:16px;line-height:15px;background:#b8c788"><b>87.7</b></div>
<div class="c" style="left:1204px;top:561px;width:47px;height:16px;line-height:15px;background:#bec287"><b>89.6</b></div>
<div class="c" style="left:1251px;top:561px;width:46px;height:16px;line-height:15px;background:#e19f84"><b>102.1</b></div>
<div class="c" style="left:1297px;top:561px;width:47px;height:16px;line-height:15px;background:#ff8282"><b>112.6</b></div>
<div class="c" style="left:1344px;top:561px;width:46px;height:16px;line-height:15px;background:#fd8482"><b>112.0</b></div>
<div class="c" style="left:1390px;top:561px;width:46px;height:16px;line-height:15px;background:#ff8282"><b>112.7</b></div>
<div class="c" style="left:1436px;top:561px;width:47px;height:16px;line-height:15px;background:#fe8382"><b>112.2</b></div>
<div class="c" style="left:1483px;top:561px;width:46px;height:16px;line-height:15px;background:#ec9484"><b>106.0</b></div>
<div class="c" style="left:1529px;top:561px;width:47px;height:16px;line-height:15px;background:#e39d84"><b>102.8</b></div>
<div class="c" style="left:1576px;top:561px;width:46px;height:16px;line-height:15px;background:#e49d84"><b>103.0</b></div>
<div class="c" style="left:1622px;top:561px;width:47px;height:16px;line-height:15px;background:#dba585"><b>99.9</b></div>
<div class="c" style="left:1669px;top:561px;width:46px;height:16px;line-height:15px;background:#e0a085"><b>101.7</b></div>
<div class="rh" style="top:577px;height:16px;line-height:13px"><b>154.0</b></div>
<div class="c" style="left:972px;top:577px;width:46px;height:16px;line-height:15px;background:#aed189"><b>84.1</b></div>
<div class="c" style="left:1018px;top:577px;width:47px;height:16px;line-height:15px;background:#b5ca88"><b>86.6</b></div>
<div class="c" style="left:1065px;top:577px;width:46px;height:16px;line-height:15px;background:#bbc487"><b>88.8</b></div>
<div class="c" style="left:1111px;top:577px;width:47px;height:16px;line-height:15px;background:#b2cd88"><b>85.4</b></div>
<div class="c" style="left:1158px;top:577px;width:46px;height:16px;line-height:15px;background:#b0ce88"><b>84.9</b></div>
<div class="c" style="left:1204px;top:577px;width:47px;height:16px;line-height:15px;background:#c9b686"><b>93.7</b></div>
<div class="c" style="left:1251px;top:577px;width:46px;height:16px;line-height:15px;background:#dba585"><b>100.1</b></div>
<div class="c" style="left:1297px;top:577px;width:47px;height:16px;line-height:15px;background:#daa685"><b>99.7</b></div>
<div class="c" style="left:1344px;top:577px;width:46px;height:16px;line-height:15px;background:#dfa185"><b>101.3</b></div>
<div class="c" style="left:1390px;top:577px;width:46px;height:16px;line-height:15px;background:#e69a84"><b>104.0</b></div>
<div class="c" style="left:1436px;top:577px;width:47px;height:16px;line-height:15px;background:#eb9684"><b>105.6</b></div>
<div class="c" style="left:1483px;top:577px;width:46px;height:16px;line-height:15px;background:#e99884"><b>104.8</b></div>
<div class="c" style="left:1529px;top:577px;width:47px;height:16px;line-height:15px;background:#dea285"><b>100.9</b></div>
<div class="c" style="left:1576px;top:577px;width:46px;height:16px;line-height:15px;background:#e29e84"><b>102.6</b></div>
<div class="c" style="left:1622px;top:577px;width:47px;height:16px;line-height:15px;background:#e69a84"><b>104.0</b></div>
<div class="c" style="left:1669px;top:577px;width:46px;height:16px;line-height:15px;background:#d3ad86"><b>97.1</b></div>
<div class="rh" style="top:593px;height:16px;line-height:13px"><b>136.0</b></div>
<div class="c" style="left:972px;top:593px;width:46px;height:16px;line-height:15px;background:#99e58a"><b>76.7</b></div>
<div class="c" style="left:1018px;top:593px;width:47px;height:16px;line-height:15px;background:#a0de8a"><b>79.2</b></div>
<div class="c" style="left:1065px;top:593px;width:46px;height:16px;line-height:15px;background:#a6d889"><b>81.4</b></div>
<div class="c" style="left:1111px;top:593px;width:47px;height:16px;line-height:15px;background:#aed189"><b>83.9</b></div>
<div class="c" style="left:1158px;top:593px;width:46px;height:16px;line-height:15px;background:#bfc187"><b>89.9</b></div>
<div class="c" style="left:1204px;top:593px;width:47px;height:16px;line-height:15px;background:#c6b987"><b>92.6</b></div>
<div class="c" style="left:1251px;top:593px;width:46px;height:16px;line-height:15px;background:#d0b086"><b>96.0</b></div>
<div class="c" style="left:1297px;top:593px;width:47px;height:16px;line-height:15px;background:#ccb486"><b>94.7</b></div>
<div class="c" style="left:1344px;top:593px;width:46px;height:16px;line-height:15px;background:#cdb386"><b>95.0</b></div>
<div class="c" style="left:1390px;top:593px;width:46px;height:16px;line-height:15px;background:#d6aa85"><b>98.2</b></div>
<div class="c" style="left:1436px;top:593px;width:47px;height:16px;line-height:15px;background:#dda385"><b>100.8</b></div>
<div class="c" style="left:1483px;top:593px;width:46px;height:16px;line-height:15px;background:#e69a84"><b>103.9</b></div>
<div class="c" style="left:1529px;top:593px;width:47px;height:16px;line-height:15px;background:#d8a885"><b>98.9</b></div>
<div class="c" style="left:1576px;top:593px;width:46px;height:16px;line-height:15px;background:#d0b086"><b>96.1</b></div>
<div class="c" style="left:1622px;top:593px;width:47px;height:16px;line-height:15px;background:#d1af86"><b>96.3</b></div>
<div class="c" style="left:1669px;top:593px;width:46px;height:16px;line-height:15px;background:#c4bb87"><b>92.0</b></div>
<div class="rh" style="top:609px;height:16px;line-height:13px"><b>118.0</b></div>
<div class="c" style="left:972px;top:609px;width:46px;height:16px;line-height:15px;background:#99e58a"><b>76.7</b></div>
<div class="c" style="left:1018px;top:609px;width:47px;height:16px;line-height:15px;background:#a1de8a"><b>79.3</b></div>
<div class="c" style="left:1065px;top:609px;width:46px;height:16px;line-height:15px;background:#a7d889"><b>81.5</b></div>
<div class="c" style="left:1111px;top:609px;width:47px;height:16px;line-height:15px;background:#afd089"><b>84.3</b></div>
<div class="c" style="left:1158px;top:609px;width:46px;height:16px;line-height:15px;background:#b2cd88"><b>85.5</b></div>
<div class="c" style="left:1204px;top:609px;width:47px;height:16px;line-height:15px;background:#b9c688"><b>87.9</b></div>
<div class="c" style="left:1251px;top:609px;width:46px;height:16px;line-height:15px;background:#bbc488"><b>88.7</b></div>
<div class="c" style="left:1297px;top:609px;width:47px;height:16px;line-height:15px;background:#b8c788"><b>87.6</b></div>
<div class="c" style="left:1344px;top:609px;width:46px;height:16px;line-height:15px;background:#b3cb88"><b>86.0</b></div>
<div class="c" style="left:1390px;top:609px;width:46px;height:16px;line-height:15px;background:#bfc087"><b>90.0</b></div>
<div class="c" style="left:1436px;top:609px;width:47px;height:16px;line-height:15px;background:#c9b686"><b>93.7</b></div>
<div class="c" style="left:1483px;top:609px;width:46px;height:16px;line-height:15px;background:#c3bd87"><b>91.4</b></div>
<div class="c" style="left:1529px;top:609px;width:47px;height:16px;line-height:15px;background:#bdc387"><b>89.2</b></div>
<div class="c" style="left:1576px;top:609px;width:46px;height:16px;line-height:15px;background:#b9c688"><b>88.0</b></div>
<div class="c" style="left:1622px;top:609px;width:47px;height:16px;line-height:15px;background:#bbc588"><b>88.5</b></div>
<div class="c" style="left:1669px;top:609px;width:46px;height:16px;line-height:15px;background:#abd389"><b>83.1</b></div>
<div class="rh" style="top:625px;height:16px;line-height:13px"><b>100.0</b></div>
<div class="c" style="left:972px;top:625px;width:46px;height:16px;line-height:15px;background:#a0df8a"><b>79.0</b></div>
<div class="c" style="left:1018px;top:625px;width:47px;height:16px;line-height:15px;background:#a8d789"><b>81.8</b></div>
<div class="c" style="left:1065px;top:625px;width:46px;height:16px;line-height:15px;background:#bcc387"><b>89.1</b></div>
<div class="c" style="left:1111px;top:625px;width:47px;height:16px;line-height:15px;background:#bec287"><b>89.6</b></div>
<div class="c" style="left:1158px;top:625px;width:46px;height:16px;line-height:15px;background:#b3cb88"><b>86.0</b></div>
<div class="c" style="left:1204px;top:625px;width:47px;height:16px;line-height:15px;background:#b3cb88"><b>86.0</b></div>
<div class="c" style="left:1251px;top:625px;width:46px;height:16px;line-height:15px;background:#b6c988"><b>86.8</b></div>
<div class="c" style="left:1297px;top:625px;width:47px;height:16px;line-height:15px;background:#add289"><b>83.7</b></div>
<div class="c" style="left:1344px;top:625px;width:46px;height:16px;line-height:15px;background:#add289"><b>83.6</b></div>
<div class="c" style="left:1390px;top:625px;width:46px;height:16px;line-height:15px;background:#b6c988"><b>87.0</b></div>
<div class="c" style="left:1436px;top:625px;width:47px;height:16px;line-height:15px;background:#bdc287"><b>89.3</b></div>
<div class="c" style="left:1483px;top:625px;width:46px;height:16px;line-height:15px;background:#b7c888"><b>87.1</b></div>
<div class="c" style="left:1529px;top:625px;width:47px;height:16px;line-height:15px;background:#b7c888"><b>87.3</b></div>
<div class="c" style="left:1576px;top:625px;width:46px;height:16px;line-height:15px;background:#afd088"><b>84.5</b></div>
<div class="c" style="left:1622px;top:625px;width:47px;height:16px;line-height:15px;background:#b5ca88"><b>86.4</b></div>
<div class="c" style="left:1669px;top:625px;width:46px;height:16px;line-height:15px;background:#a5da89"><b>80.9</b></div>
<div class="rh" style="top:641px;height:16px;line-height:13px"><b>95.0</b></div>
<div class="c" style="left:972px;top:641px;width:46px;height:16px;line-height:15px;background:#94ea8b"><b>75.0</b></div>
<div class="c" style="left:1018px;top:641px;width:47px;height:16px;line-height:15px;background:#9fdf8a"><b>78.8</b></div>
<div class="c" style="left:1065px;top:641px;width:46px;height:16px;line-height:15px;background:#b3cb88"><b>86.0</b></div>
<div class="c" style="left:1111px;top:641px;width:47px;height:16px;line-height:15px;background:#bac588"><b>88.3</b></div>
<div class="c" style="left:1158px;top:641px;width:46px;height:16px;line-height:15px;background:#a7d889"><b>81.5</b></div>
<div class="c" style="left:1204px;top:641px;width:47px;height:16px;line-height:15px;background:#a2dd8a"><b>79.7</b></div>
<div class="c" style="left:1251px;top:641px;width:46px;height:16px;line-height:15px;background:#aad589"><b>82.6</b></div>
<div class="c" style="left:1297px;top:641px;width:47px;height:16px;line-height:15px;background:#a4db89"><b>80.5</b></div>
<div class="c" style="left:1344px;top:641px;width:46px;height:16px;line-height:15px;background:#a9d689"><b>82.2</b></div>
<div class="c" style="left:1390px;top:641px;width:46px;height:16px;line-height:15px;background:#b4cb88"><b>86.3</b></div>
<div class="c" style="left:1436px;top:641px;width:47px;height:16px;line-height:15px;background:#b2cd88"><b>85.4</b></div>
<div class="c" style="left:1483px;top:641px;width:46px;height:16px;line-height:15px;background:#a5d989"><b>81.0</b></div>
<div class="c" style="left:1529px;top:641px;width:47px;height:16px;line-height:15px;background:#acd389"><b>83.2</b></div>
<div class="c" style="left:1576px;top:641px;width:46px;height:16px;line-height:15px;background:#a5da89"><b>80.9</b></div>
<div class="c" style="left:1622px;top:641px;width:47px;height:16px;line-height:15px;background:#abd489"><b>82.9</b></div>
<div class="c" style="left:1669px;top:641px;width:46px;height:16px;line-height:15px;background:#a4db89"><b>80.5</b></div>
<div class="rh" style="top:657px;height:16px;line-height:13px"><b>85.0</b></div>
<div class="c" style="left:972px;top:657px;width:46px;height:16px;line-height:15px;background:#92ec8b"><b>74.2</b></div>
<div class="c" style="left:1018px;top:657px;width:47px;height:16px;line-height:15px;background:#aad489"><b>82.8</b></div>
<div class="c" style="left:1065px;top:657px;width:46px;height:16px;line-height:15px;background:#b8c788"><b>87.6</b></div>
<div class="c" style="left:1111px;top:657px;width:47px;height:16px;line-height:15px;background:#9ce28a"><b>77.8</b></div>
<div class="c" style="left:1158px;top:657px;width:46px;height:16px;line-height:15px;background:#a0df8a"><b>79.0</b></div>
<div class="c" style="left:1204px;top:657px;width:47px;height:16px;line-height:15px;background:#a7d889"><b>81.6</b></div>
<div class="c" style="left:1251px;top:657px;width:46px;height:16px;line-height:15px;background:#a3db89"><b>80.3</b></div>
<div class="c" style="left:1297px;top:657px;width:47px;height:16px;line-height:15px;background:#97e78a"><b>75.9</b></div>
<div class="c" style="left:1344px;top:657px;width:46px;height:16px;line-height:15px;background:#9fe08a"><b>78.7</b></div>
<div class="c" style="left:1390px;top:657px;width:46px;height:16px;line-height:15px;background:#add289"><b>83.8</b></div>
<div class="c" style="left:1436px;top:657px;width:47px;height:16px;line-height:15px;background:#b3cc88"><b>85.8</b></div>
<div class="c" style="left:1483px;top:657px;width:46px;height:16px;line-height:15px;background:#b0cf88"><b>84.7</b></div>
<div class="c" style="left:1529px;top:657px;width:47px;height:16px;line-height:15px;background:#a7d889"><b>81.6</b></div>
<div class="c" style="left:1576px;top:657px;width:46px;height:16px;line-height:15px;background:#a3dc89"><b>80.0</b></div>
<div class="c" style="left:1622px;top:657px;width:47px;height:16px;line-height:15px;background:#9be38a"><b>77.4</b></div>
<div class="c" style="left:1669px;top:657px;width:46px;height:16px;line-height:15px;background:#90ec8d"><b>72.8</b></div>
<div class="rh" style="top:673px;height:16px;line-height:13px"><b>75.0</b></div>
<div class="c" style="left:972px;top:673px;width:46px;height:16px;line-height:15px;background:#8fe199"><b>68.8</b></div>
<div class="c" style="left:1018px;top:673px;width:47px;height:16px;line-height:15px;background:#99e68a"><b>76.5</b></div>
<div class="c" style="left:1065px;top:673px;width:46px;height:16px;line-height:15px;background:#b9c688"><b>87.9</b></div>
<div class="c" style="left:1111px;top:673px;width:47px;height:16px;line-height:15px;background:#aad489"><b>82.8</b></div>
<div class="c" style="left:1158px;top:673px;width:46px;height:16px;line-height:15px;background:#95e98b"><b>75.1</b></div>
<div class="c" style="left:1204px;top:673px;width:47px;height:16px;line-height:15px;background:#94ea8b"><b>74.8</b></div>
<div class="c" style="left:1251px;top:673px;width:46px;height:16px;line-height:15px;background:#96e88b"><b>75.5</b></div>
<div class="c" style="left:1297px;top:673px;width:47px;height:16px;line-height:15px;background:#90ec8d"><b>72.7</b></div>
<div class="c" style="left:1344px;top:673px;width:46px;height:16px;line-height:15px;background:#97e78a"><b>76.1</b></div>
<div class="c" style="left:1390px;top:673px;width:46px;height:16px;line-height:15px;background:#9fe08a"><b>78.6</b></div>
<div class="c" style="left:1436px;top:673px;width:47px;height:16px;line-height:15px;background:#a3dc89"><b>80.1</b></div>
<div class="c" style="left:1483px;top:673px;width:46px;height:16px;line-height:15px;background:#a1dd8a"><b>79.5</b></div>
<div class="c" style="left:1529px;top:673px;width:47px;height:16px;line-height:15px;background:#9ae58a"><b>76.9</b></div>
<div class="c" style="left:1576px;top:673px;width:46px;height:16px;line-height:15px;background:#96e88b"><b>75.5</b></div>
<div class="c" style="left:1622px;top:673px;width:47px;height:16px;line-height:15px;background:#90ed8c"><b>73.0</b></div>
<div class="c" style="left:1669px;top:673px;width:46px;height:16px;line-height:15px;background:#8fe694"><b>70.5</b></div>
<div class="rh" style="top:689px;height:16px;line-height:13px"><b>65.0</b></div>
<div class="c" style="left:972px;top:689px;width:46px;height:16px;line-height:15px;background:#8ed2a9"><b>63.3</b></div>
<div class="c" style="left:1018px;top:689px;width:47px;height:16px;line-height:15px;background:#8fe793"><b>70.8</b></div>
<div class="c" style="left:1065px;top:689px;width:46px;height:16px;line-height:15px;background:#96e88a"><b>75.7</b></div>
<div class="c" style="left:1111px;top:689px;width:47px;height:16px;line-height:15px;background:#95e98b"><b>75.1</b></div>
<div class="c" style="left:1158px;top:689px;width:46px;height:16px;line-height:15px;background:#8fe892"><b>71.1</b></div>
<div class="c" style="left:1204px;top:689px;width:47px;height:16px;line-height:15px;background:#8fe397"><b>69.4</b></div>
<div class="c" style="left:1251px;top:689px;width:46px;height:16px;line-height:15px;background:#92ec8b"><b>74.0</b></div>
<div class="c" style="left:1297px;top:689px;width:47px;height:16px;line-height:15px;background:#8fdf9b"><b>67.9</b></div>
<div class="c" style="left:1344px;top:689px;width:46px;height:16px;line-height:15px;background:#8fe298"><b>69.1</b></div>
<div class="c" style="left:1390px;top:689px;width:46px;height:16px;line-height:15px;background:#96e88a"><b>75.7</b></div>
<div class="c" style="left:1436px;top:689px;width:47px;height:16px;line-height:15px;background:#98e68a"><b>76.4</b></div>
<div class="c" style="left:1483px;top:689px;width:46px;height:16px;line-height:15px;background:#9ae48a"><b>77.1</b></div>
<div class="c" style="left:1529px;top:689px;width:47px;height:16px;line-height:15px;background:#8fe09a"><b>68.3</b></div>
<div class="c" style="left:1576px;top:689px;width:46px;height:16px;line-height:15px;background:#8fe396"><b>69.6</b></div>
<div class="c" style="left:1622px;top:689px;width:47px;height:16px;line-height:15px;background:#8fe694"><b>70.5</b></div>
<div class="c" style="left:1669px;top:689px;width:46px;height:16px;line-height:15px;background:#90e991"><b>71.5</b></div>
<div class="rh" style="top:705px;height:16px;line-height:13px"><b>55.0</b></div>
<div class="c" style="left:972px;top:705px;width:46px;height:16px;line-height:15px;background:#8edb9f"><b>66.6</b></div>
<div class="c" style="left:1018px;top:705px;width:47px;height:16px;line-height:15px;background:#91ed8b"><b>73.8</b></div>
<div class="c" style="left:1065px;top:705px;width:46px;height:16px;line-height:15px;background:#8edc9f"><b>66.8</b></div>
<div class="c" style="left:1111px;top:705px;width:47px;height:16px;line-height:15px;background:#8fe09b"><b>68.2</b></div>
<div class="c" style="left:1158px;top:705px;width:46px;height:16px;line-height:15px;background:#8fde9d"><b>67.5</b></div>
<div class="c" style="left:1204px;top:705px;width:47px;height:16px;line-height:15px;background:#8ed6a5"><b>64.6</b></div>
<div class="c" style="left:1251px;top:705px;width:46px;height:16px;line-height:15px;background:#8fe594"><b>70.3</b></div>
<div class="c" style="left:1297px;top:705px;width:47px;height:16px;line-height:15px;background:#8ed6a5"><b>64.6</b></div>
<div class="c" style="left:1344px;top:705px;width:46px;height:16px;line-height:15px;background:#8fdd9d"><b>67.2</b></div>
<div class="c" style="left:1390px;top:705px;width:46px;height:16px;line-height:15px;background:#8fe595"><b>70.0</b></div>
<div class="c" style="left:1436px;top:705px;width:47px;height:16px;line-height:15px;background:#90ea90"><b>71.9</b></div>
<div class="c" style="left:1483px;top:705px;width:46px;height:16px;line-height:15px;background:#90ec8d"><b>72.9</b></div>
<div class="c" style="left:1529px;top:705px;width:47px;height:16px;line-height:15px;background:#8ed4a7"><b>64.1</b></div>
<div class="c" style="left:1576px;top:705px;width:46px;height:16px;line-height:15px;background:#8ed8a3"><b>65.4</b></div>
<div class="c" style="left:1622px;top:705px;width:47px;height:16px;line-height:15px;background:#8edba0"><b>66.4</b></div>
<div class="c" style="left:1669px;top:705px;width:46px;height:16px;line-height:15px;background:#8fdd9d"><b>67.4</b></div>
<div class="rh" style="top:721px;height:16px;line-height:13px"><b>45.0</b></div>
<div class="c" style="left:972px;top:721px;width:46px;height:16px;line-height:15px;background:#8dcdaf"><b>61.3</b></div>
<div class="c" style="left:1018px;top:721px;width:47px;height:16px;line-height:15px;background:#8ed8a2"><b>65.5</b></div>
<div class="c" style="left:1065px;top:721px;width:46px;height:16px;line-height:15px;background:#8fdf9b"><b>67.9</b></div>
<div class="c" style="left:1111px;top:721px;width:47px;height:16px;line-height:15px;background:#8edc9f"><b>66.8</b></div>
<div class="c" style="left:1158px;top:721px;width:46px;height:16px;line-height:15px;background:#8dcbb1"><b>60.6</b></div>
<div class="c" style="left:1204px;top:721px;width:47px;height:16px;line-height:15px;background:#8dcbb0"><b>60.8</b></div>
<div class="c" style="left:1251px;top:721px;width:46px;height:16px;line-height:15px;background:#8fde9c"><b>67.7</b></div>
<div class="c" style="left:1297px;top:721px;width:47px;height:16px;line-height:15px;background:#8edb9f"><b>66.6</b></div>
<div class="c" style="left:1344px;top:721px;width:46px;height:16px;line-height:15px;background:#8edba0"><b>66.4</b></div>
<div class="c" style="left:1390px;top:721px;width:46px;height:16px;line-height:15px;background:#90ee8b"><b>73.6</b></div>
<div class="c" style="left:1436px;top:721px;width:47px;height:16px;line-height:15px;background:#9be48a"><b>77.2</b></div>
<div class="c" style="left:1483px;top:721px;width:46px;height:16px;line-height:15px;background:#95e98b"><b>75.2</b></div>
<div class="c" style="left:1529px;top:721px;width:47px;height:16px;line-height:15px;background:#8fe693"><b>70.7</b></div>
<div class="c" style="left:1576px;top:721px;width:46px;height:16px;line-height:15px;background:#8fe09a"><b>68.4</b></div>
<div class="c" style="left:1622px;top:721px;width:47px;height:16px;line-height:15px;background:#8edaa0"><b>66.2</b></div>
<div class="c" style="left:1669px;top:721px;width:46px;height:16px;line-height:15px;background:#8ed2a9"><b>63.4</b></div>
<div class="rh" style="top:737px;height:16px;line-height:13px"><b>35.0</b></div>
<div class="c" style="left:972px;top:737px;width:46px;height:16px;line-height:15px;background:#8dcfac"><b>62.2</b></div>
<div class="c" style="left:1018px;top:737px;width:47px;height:16px;line-height:15px;background:#8ed1aa"><b>62.9</b></div>
<div class="c" style="left:1065px;top:737px;width:46px;height:16px;line-height:15px;background:#8dcfac"><b>62.2</b></div>
<div class="c" style="left:1111px;top:737px;width:47px;height:16px;line-height:15px;background:#90e990"><b>71.8</b></div>
<div class="c" style="left:1158px;top:737px;width:46px;height:16px;line-height:15px;background:#8dcfac"><b>62.3</b></div>
<div class="c" style="left:1204px;top:737px;width:47px;height:16px;line-height:15px;background:#8dcdae"><b>61.6</b></div>
<div class="c" style="left:1251px;top:737px;width:46px;height:16px;line-height:15px;background:#90e891"><b>71.4</b></div>
<div class="c" style="left:1297px;top:737px;width:47px;height:16px;line-height:15px;background:#8ed8a2"><b>65.6</b></div>
<div class="c" style="left:1344px;top:737px;width:46px;height:16px;line-height:15px;background:#8fe397"><b>69.5</b></div>
<div class="c" style="left:1390px;top:737px;width:46px;height:16px;line-height:15px;background:#90e990"><b>71.8</b></div>
<div class="c" style="left:1436px;top:737px;width:47px;height:16px;line-height:15px;background:#92ec8b"><b>74.3</b></div>
<div class="c" style="left:1483px;top:737px;width:46px;height:16px;line-height:15px;background:#90ee8b"><b>73.3</b></div>
<div class="c" style="left:1529px;top:737px;width:47px;height:16px;line-height:15px;background:#8edba0"><b>66.5</b></div>
<div class="c" style="left:1576px;top:737px;width:46px;height:16px;line-height:15px;background:#8ed5a6"><b>64.3</b></div>
<div class="c" style="left:1622px;top:737px;width:47px;height:16px;line-height:15px;background:#8dcfac"><b>62.2</b></div>
<div class="c" style="left:1669px;top:737px;width:46px;height:16px;line-height:15px;background:#8dc7b5"><b>59.4</b></div>
<div class="rh" style="top:753px;height:16px;line-height:13px"><b>30.0</b></div>
<div class="c" style="left:972px;top:753px;width:46px;height:16px;line-height:15px;background:#8bb6c7"><b>53.0</b></div>
<div class="c" style="left:1018px;top:753px;width:47px;height:16px;line-height:15px;background:#8dcab2"><b>60.4</b></div>
<div class="c" style="left:1065px;top:753px;width:46px;height:16px;line-height:15px;background:#8ed5a6"><b>64.3</b></div>
<div class="c" style="left:1111px;top:753px;width:47px;height:16px;line-height:15px;background:#8ed6a5"><b>64.6</b></div>
<div class="c" style="left:1158px;top:753px;width:46px;height:16px;line-height:15px;background:#8cbac3"><b>54.5</b></div>
<div class="c" style="left:1204px;top:753px;width:47px;height:16px;line-height:15px;background:#8cc1bb"><b>57.2</b></div>
<div class="c" style="left:1251px;top:753px;width:46px;height:16px;line-height:15px;background:#8fdd9d"><b>67.4</b></div>
<div class="c" style="left:1297px;top:753px;width:47px;height:16px;line-height:15px;background:#8dccaf"><b>61.2</b></div>
<div class="c" style="left:1344px;top:753px;width:46px;height:16px;line-height:15px;background:#8fe496"><b>69.7</b></div>
<div class="c" style="left:1390px;top:753px;width:46px;height:16px;line-height:15px;background:#8ed5a5"><b>64.5</b></div>
<div class="c" style="left:1436px;top:753px;width:47px;height:16px;line-height:15px;background:#8ed0ab"><b>62.7</b></div>
<div class="c" style="left:1483px;top:753px;width:46px;height:16px;line-height:15px;background:#8ed8a3"><b>65.3</b></div>
<div class="c" style="left:1529px;top:753px;width:47px;height:16px;line-height:15px;background:#8ed5a6"><b>64.3</b></div>
<div class="c" style="left:1576px;top:753px;width:46px;height:16px;line-height:15px;background:#8dcab2"><b>60.3</b></div>
<div class="c" style="left:1622px;top:753px;width:47px;height:16px;line-height:15px;background:#8cbfbe"><b>56.3</b></div>
<div class="c" style="left:1669px;top:753px;width:46px;height:16px;line-height:15px;background:#8cc2bb"><b>57.3</b></div>
<div class="rh" style="top:769px;height:16px;line-height:13px"><b>25.0</b></div>
<div class="c" style="left:972px;top:769px;width:46px;height:16px;line-height:15px;background:#8bb6c7"><b>53.1</b></div>
<div class="c" style="left:1018px;top:769px;width:47px;height:16px;line-height:15px;background:#8dc5b7"><b>58.4</b></div>
<div class="c" style="left:1065px;top:769px;width:46px;height:16px;line-height:15px;background:#8edaa1"><b>66.0</b></div>
<div class="c" style="left:1111px;top:769px;width:47px;height:16px;line-height:15px;background:#8dcab2"><b>60.4</b></div>
<div class="c" style="left:1158px;top:769px;width:46px;height:16px;line-height:15px;background:#8aabd3"><b>49.1</b></div>
<div class="c" style="left:1204px;top:769px;width:47px;height:16px;line-height:15px;background:#8aa4db"><b>46.5</b></div>
<div class="c" style="left:1251px;top:769px;width:46px;height:16px;line-height:15px;background:#8bb7c7"><b>53.3</b></div>
<div class="c" style="left:1297px;top:769px;width:47px;height:16px;line-height:15px;background:#8cbbc2"><b>55.0</b></div>
<div class="c" style="left:1344px;top:769px;width:46px;height:16px;line-height:15px;background:#8bafcf"><b>50.5</b></div>
<div class="c" style="left:1390px;top:769px;width:46px;height:16px;line-height:15px;background:#8cbcc1"><b>55.1</b></div>
<div class="c" style="left:1436px;top:769px;width:47px;height:16px;line-height:15px;background:#89a0df"><b>45.1</b></div>
<div class="c" style="left:1483px;top:769px;width:46px;height:16px;line-height:15px;background:#8bb6c7"><b>53.2</b></div>
<div class="c" style="left:1529px;top:769px;width:47px;height:16px;line-height:15px;background:#8dcfad"><b>62.1</b></div>
<div class="c" style="left:1576px;top:769px;width:46px;height:16px;line-height:15px;background:#8aa2dc"><b>46.0</b></div>
<div class="c" style="left:1622px;top:769px;width:47px;height:16px;line-height:15px;background:#8aa7d8"><b>47.5</b></div>
<div class="c" style="left:1669px;top:769px;width:46px;height:16px;line-height:15px;background:#8cbcc1"><b>55.2</b></div>
<div class="rh" style="top:785px;height:16px;line-height:13px"><b>15.0</b></div>
<div class="c" style="left:972px;top:785px;width:46px;height:16px;line-height:15px;background:#8bb5c8"><b>52.7</b></div>
<div class="c" style="left:1018px;top:785px;width:47px;height:16px;line-height:15px;background:#8bb5c8"><b>52.8</b></div>
<div class="c" style="left:1065px;top:785px;width:46px;height:16px;line-height:15px;background:#8bb2cc"><b>51.6</b></div>
<div class="c" style="left:1111px;top:785px;width:47px;height:16px;line-height:15px;background:#8bb2cb"><b>51.8</b></div>
<div class="c" style="left:1158px;top:785px;width:46px;height:16px;line-height:15px;background:#8bafcf"><b>50.5</b></div>
<div class="c" style="left:1204px;top:785px;width:47px;height:16px;line-height:15px;background:#899de2"><b>44.0</b></div>
<div class="c" style="left:1251px;top:785px;width:46px;height:16px;line-height:15px;background:#899ae5"><b>43.0</b></div>
<div class="c" style="left:1297px;top:785px;width:47px;height:16px;line-height:15px;background:#899de2"><b>44.1</b></div>
<div class="c" style="left:1344px;top:785px;width:46px;height:16px;line-height:15px;background:#8bacd1"><b>49.6</b></div>
<div class="c" style="left:1390px;top:785px;width:46px;height:16px;line-height:15px;background:#899ee1"><b>44.5</b></div>
<div class="c" style="left:1436px;top:785px;width:47px;height:16px;line-height:15px;background:#8782ff"><b>34.2</b></div>
<div class="c" style="left:1483px;top:785px;width:46px;height:16px;line-height:15px;background:#8aabd3"><b>49.2</b></div>
<div class="c" style="left:1529px;top:785px;width:47px;height:16px;line-height:15px;background:#8cbfbe"><b>56.3</b></div>
<div class="c" style="left:1576px;top:785px;width:46px;height:16px;line-height:15px;background:#8aa2dd"><b>45.8</b></div>
<div class="c" style="left:1622px;top:785px;width:47px;height:16px;line-height:15px;background:#8bacd2"><b>49.5</b></div>
<div class="c" style="left:1669px;top:785px;width:46px;height:16px;line-height:15px;background:#8bb1cc"><b>51.3</b></div>
<div class="a" style="left:969.5px;top:545px;width:1.5px;height:256px;background:#6c7b8e"></div>
<div class="a" style="left:971px;top:545px;width:1px;height:256px;background:#dfe3df"></div>
<div class="a" style="left:971px;top:799px;width:745px;height:2px;background:#f6f6f6"></div>
<div class="a" style="left:924px;top:800px;width:48px;height:1px;background:#f6f6f6"></div>
<div class="a" style="left:924px;top:800px;width:47px;height:25px;background:#efefef;border:1px solid #9c9c9c"></div>
<svg class="a" style="left:937px;top:804px" width="20" height="17" viewBox="0 0 20 17"><g fill="#bdbdbd"><path d="M4.600 4h2.200v7.900H15v2.200H4.600z"/><path d="M5.700 0L9.300 4.600H2.100z"/><path d="M18.800 13L14.200 16.600V9.400z"/></g></svg>
<div class="ch" style="left:973px;top:800px;width:45px;height:25px;line-height:21px"><b>500</b></div>
<div class="ch" style="left:1019px;top:800px;width:46px;height:25px;line-height:21px"><b>700</b></div>
<div class="ch" style="left:1066px;top:800px;width:45px;height:25px;line-height:21px"><b>900</b></div>
<div class="ch" style="left:1112px;top:800px;width:46px;height:25px;line-height:21px"><b>1300</b></div>
<div class="ch" style="left:1159px;top:800px;width:45px;height:25px;line-height:21px"><b>1700</b></div>
<div class="ch" style="left:1205px;top:800px;width:46px;height:25px;line-height:21px"><b>2200</b></div>
<div class="ch" style="left:1252px;top:800px;width:45px;height:25px;line-height:21px"><b>2700</b></div>
<div class="ch" style="left:1298px;top:800px;width:46px;height:25px;line-height:21px"><b>3300</b></div>
<div class="ch" style="left:1345px;top:800px;width:45px;height:25px;line-height:21px"><b>3800</b></div>
<div class="ch" style="left:1391px;top:800px;width:45px;height:25px;line-height:21px"><b>4300</b></div>
<div class="ch" style="left:1437px;top:800px;width:46px;height:25px;line-height:21px"><b>4800</b></div>
<div class="ch" style="left:1484px;top:800px;width:45px;height:25px;line-height:21px"><b>5200</b></div>
<div class="ch" style="left:1530px;top:800px;width:46px;height:25px;line-height:21px"><b>5700</b></div>
<div class="ch" style="left:1577px;top:800px;width:45px;height:25px;line-height:21px"><b>6200</b></div>
<div class="ch" style="left:1623px;top:800px;width:46px;height:25px;line-height:21px"><b>6600</b></div>
<div class="ch" style="left:1670px;top:800px;width:45px;height:25px;line-height:21px"><b>7000</b></div>
<div class="a sb" style="left:1291px;top:830px;width:40px;text-align:center;font-size:12px;line-height:16px;color:#222">rpm</div>
<div class="yl" style="top:578px">f</div>
<div class="yl" style="top:593px">u</div>
<div class="yl" style="top:608px">e</div>
<div class="yl" style="top:623px">l</div>
<div class="yl" style="top:638px">l</div>
<div class="yl" style="top:653px">o</div>
<div class="yl" style="top:668px">a</div>
<div class="yl" style="top:683px">d</div>
<div class="yl" style="top:713px">k</div>
<div class="yl" style="top:728px">p</div>
<div class="yl" style="top:743px">a</div>
<div class="a" style="left:0;top:848px;width:1724px;height:1px;background:#6584c4"></div>
<svg class="a" style="left:0;top:845px" width="240" height="26" viewBox="0 845 240 26"><path d="M70.5 848.5V862L76.0 867.5H119.5V848.5" fill="#efefef" stroke="#8597b8" stroke-width="1"/><path d="M119.5 848.5V862L125.0 867.5H190.5V848.5" fill="#efefef" stroke="#8597b8" stroke-width="1"/><path d="M190.5 848.5V862L196.0 867.5H230.5V848.5" fill="#efefef" stroke="#8597b8" stroke-width="1"/><path d="M2.5 846V861.500L8.5 867.500H70.5V846z" fill="#c8ddf2" stroke="none"/><path d="M2.5 846V861.500L8.5 867.500H70.5V848.5" fill="none" stroke="#6584c4" stroke-width="1"/><path d="M3.5 846V861" fill="none" stroke="#f4f8fc" stroke-width="1"/></svg>
<div class="a tl" style="left:12.8px;top:851px;letter-spacing:-0.15px">Fuel Tab</div>
<div class="a tl" style="left:80.8px;top:851px;letter-spacing:-0.6px">Dyno</div>
<div class="a tl" style="left:129.8px;top:851px;letter-spacing:-0.27px">Basic AE</div>
<svg class="a" style="left:203px;top:850px" width="16" height="16" viewBox="0 0 16 16"><path d="M2.500 1.500h6l3 3v9h-9z" fill="#d7d9f2" stroke="#7a7c96"/><path d="M8.500 1.500v3h3" fill="none" stroke="#7a7c96"/><path d="M12 9v6M9 12h6M10 10l4 4M14 10l-4 4" stroke="#444" stroke-width=".9"/></svg>
<div class="a" style="left:0;top:870px;width:1726px;height:2px;background:#c6dbf2"></div>
<div class="a" style="left:0;top:872px;width:1726px;height:1px;background:#93a0b4"></div>
<div class="a" style="left:0;top:883px;width:434px;height:23px;border-top:2px solid #747474;border-left:1px solid #747474;border-right:1px solid #fff;border-bottom:1px solid #fff;background:#f2f2f2"><div class="a sb" style="left:1.5px;top:2.7px;letter-spacing:-0.117px;font-size:12px;line-height:16px;white-space:nowrap;color:#222">Error: Error in section [VeAnalyzeMaps], unable to parse ini row. Error: Err...</div></div>
<div class="a" style="left:436px;top:885px;width:601px;height:20px;border:1px solid #5a5a5a;background:#fff"><div class="a" style="left:2px;top:2px;width:596px;height:14px;background:#0a7aff;border-bottom:1px solid #0a5fd0"></div></div>
<div class="a" style="left:1039px;top:883px;width:206px;height:23px;border-top:2px solid #7d7d7d;border-left:1px solid #7d7d7d;border-right:1px solid #fff;background:#f0f0f0"><div class="a" style="left:9px;top:3px;font-size:12px;line-height:16px;white-space:nowrap;color:#222">AFR Table Generator</div><div class="a" style="left:134px;top:3px;font-size:12px;line-height:16px;white-space:nowrap;color:#0000ee;text-decoration:underline">Learn More!</div></div>
<div class="a" style="left:1246px;top:883px;width:435px;height:23px;border-top:2px solid #7d7d7d;border-left:1px solid #7d7d7d;border-right:1px solid #fff;background:#eeeeee"></div>
<div class="a" style="left:1681px;top:883px;width:26px;height:23px;border-top:2px solid #7d7d7d;border-left:1px solid #7d7d7d;border-right:1px solid #fff;background:#f0f0f0"></div>
<svg class="a" style="left:1684px;top:885px" width="20" height="20" viewBox="0 0 20 20"><rect x="3" y="6" width="14" height="8" rx="4" fill="#808080"/><circle cx="6.500" cy="10" r="3.500" fill="#5a0000"/><circle cx="14" cy="9.500" r="3.500" fill="#006400"/><circle cx="10" cy="10" r="8.500" fill="none" stroke="#ff0000" stroke-width="1.800"/><path d="M4 4l12 12" stroke="#ff0000" stroke-width="1.800"/></svg>
<svg class="a" style="left:1715px;top:891px" width="11" height="14" viewBox="0 0 11 14"><g fill="#9a9a9a"><rect x="9" y="1" width="1" height="1"/><rect x="5" y="5" width="1" height="1"/><rect x="9" y="5" width="1" height="1"/><rect x="1" y="9" width="1" height="1"/><rect x="5" y="9" width="1" height="1"/><rect x="9" y="9" width="1" height="1"/></g></svg>
</body></html>
